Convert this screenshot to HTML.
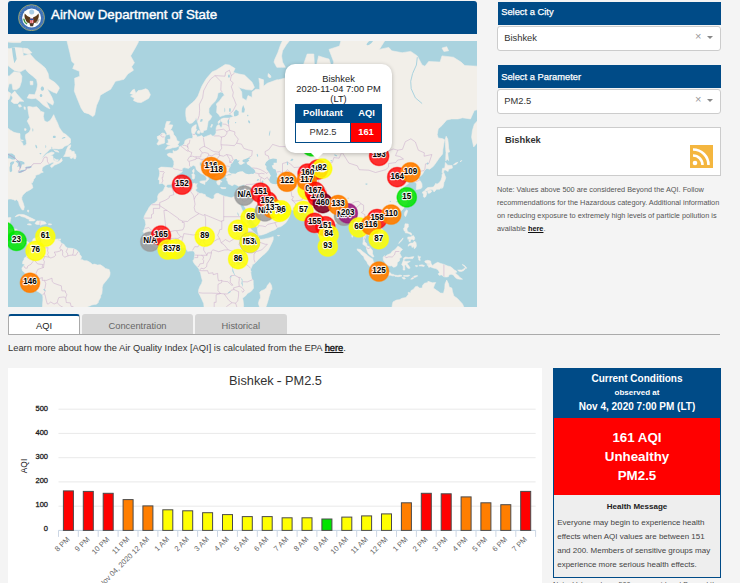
<!DOCTYPE html>
<html><head><meta charset="utf-8"><title>AirNow Department of State</title>
<style>
*{box-sizing:border-box}
html,body{margin:0;padding:0}
body{width:740px;height:583px;overflow:hidden;background:#f4f4f4;font-family:"Liberation Sans",sans-serif;position:relative;color:#333}
.abs{position:absolute}
#hdr{left:8px;top:1px;width:469px;height:33px;background:#004b87;border-radius:3px 3px 0 0}
#hdr .t{position:absolute;left:43px;top:5px;font-size:13.35px;-webkit-text-stroke:.4px #fff;color:#fff;white-space:nowrap;line-height:18px}
#map{left:8px;top:41px;width:469px;height:266px;background:#aad3df;overflow:hidden}
.ml{font:bold 9.7px "Liberation Sans",sans-serif;text-anchor:middle;fill:#000;stroke:rgba(255,255,255,.9);stroke-width:2.3px;paint-order:stroke;stroke-linejoin:round}
#pop{left:277px;top:22.5px;width:107px;height:89.5px;background:#fff;border-radius:10px;box-shadow:0 1px 4px rgba(0,0,0,.25);font-size:9.33px;text-align:center;color:#222}
#pop .arrow{position:absolute;left:26.2px;top:89.4px;width:0;height:0;border:6.3px solid transparent;border-top:6.2px solid #fff;border-bottom:0}
.sh{left:498px;width:222.5px;height:24px;background:#004b87;color:#fff;font-size:9.33px;line-height:24px;padding-left:3.2px;-webkit-text-stroke:.25px #fff}
.sb{left:497px;width:224px;height:25px;background:#fff;border:1px solid #ccc;border-radius:3px;font-size:9.33px;line-height:22.6px;padding-left:6.3px;color:#333}
.sb .x{position:absolute;right:18.5px;top:-2px;color:#999;font-size:11px}
.sb .c{position:absolute;right:7px;top:8.7px;width:0;height:0;border:3px solid transparent;border-top:3.5px solid #888;border-bottom:0}
#city{left:497px;top:127px;width:224px;height:49px;background:#fff;border:1px solid #ccc}
#city b{position:absolute;left:7px;top:7px;font-size:9.33px;color:#333}
#note{left:497px;top:183px;width:230px;font-size:7.33px;line-height:13px;color:#555}
#note b{color:#111;text-decoration:underline}
#tabs{left:8px;top:314px;width:712px;height:21px;border-bottom:1px solid #aaa}
.tab{position:absolute;top:0;height:20px;background:#d5d5d5;color:#666;font-size:9.33px;text-align:center;line-height:24px;border-radius:3px 3px 0 0}
.tab.on{background:#fff;color:#222;border:1px solid #aaa;border-top:2px solid #004b87;border-bottom:0;height:20px;line-height:20px}
#learn{left:8px;top:343px;font-size:9.33px;color:#333;white-space:nowrap}
#learn b{text-decoration:underline;color:#111;font-weight:normal;-webkit-text-stroke:.35px #111}
#chart{left:8px;top:368px;width:534.3px;height:215px;background:#fff}
#ctitle{left:8px;top:372.6px;width:535px;text-align:center;font-size:12.75px;color:#333}
.yl{font:7.5px "Liberation Sans",sans-serif;text-anchor:end;fill:#222;stroke:#222;stroke-width:.3px}
.xl{font:7.5px "Liberation Sans",sans-serif;text-anchor:end;fill:#666}
#cond{left:553px;top:368px;width:168px;height:210px;border:1px solid #004b87;background:#eee}
#cond .h{position:absolute;left:-1px;top:-1px;width:168px;height:50px;background:#004b87;color:#fff;text-align:center;font-weight:bold}
#cond .r{position:absolute;left:0;top:49px;width:166px;height:77px;background:#ff0000;color:#fff;text-align:center;font-weight:bold;font-size:13.33px;line-height:19px;padding-top:10px}
#cond .m{position:absolute;left:0;top:126.5px;width:166px;text-align:center;font-size:8px;font-weight:bold;color:#222;padding-top:6px}
#cond .p{position:absolute;left:3.2px;top:146.5px;width:160px;font-size:8px;line-height:14px;color:#444}
#note2{left:553px;top:580px;font-size:7.33px;color:#555;white-space:nowrap}
</style></head><body>
<div id="hdr" class="abs">
<svg class="abs" style="left:10px;top:2.5px" width="27" height="27" viewBox="0 0 27 27"><circle cx="13.5" cy="13.7" r="13" fill="#3c6fb4" stroke="#b4b468" stroke-width=".8"/><circle cx="13.5" cy="13.7" r="11.6" fill="none" stroke="#6f97cf" stroke-width=".7" stroke-dasharray="1 1"/><circle cx="13.6" cy="14" r="9.5" fill="#fdfdfd"/><circle cx="13.7" cy="7.9" r="2.5" fill="#a9cde6"/><path d="M6.7 9.4Q5.6 14.2 9.6 18.8L12.2 18.9L12.3 13.4Q9.2 12.6 6.7 9.4Z" fill="#5b3a1a"/><path d="M20.6 9.4Q21.7 14.2 17.7 18.8L15.1 18.9L15 13.4Q18.1 12.6 20.6 9.4Z" fill="#5b3a1a"/><path d="M11.4 19L16 19L15 22.3L12.3 22.3Z" fill="#4a3a2a"/><rect x="11.8" y="14.6" width="3.8" height="4.6" rx=".8" fill="#e2474d"/><path d="M12.9 15.8V19.1M14.5 15.8V19.1" stroke="#fff" stroke-width=".55"/><rect x="11.8" y="14.6" width="3.8" height="1.5" fill="#2b4f9c"/><path d="M5.9 15.2Q6.2 18.2 8.6 19.6" stroke="#3f9440" stroke-width="1.5" fill="none" stroke-linecap="round"/><path d="M21.3 15.4L18.8 19.8M20.3 15L18 19.2" stroke="#8a8478" stroke-width=".7" fill="none"/></svg>
<div class="t">AirNow Department of State</div></div>

<div id="map" class="abs">
<svg class="abs" style="left:0;top:0" width="469" height="266" viewBox="8 41 469 266"><defs><clipPath id="landclip"><path d="M37.6 9.8L47.1 29.0L62.3 31.4L67.0 41.1L69.9 52.7L71.8 61.5L74.6 63.9L72.7 68.5L79.4 71.3L79.8 76.2L74.6 78.3L75.0 84.8L74.3 91.1L77.5 99.2L81.3 108.4L84.1 112.4L88.9 113.9L92.7 116.6L94.6 115.1L95.5 110.4L96.5 105.5L99.3 99.2L100.3 95.2L105.0 92.4L110.7 89.2L115.4 81.3L124.0 79.3L127.8 74.0L133.5 70.2L131.6 66.8L134.4 62.7L130.6 55.9L134.4 49.4L138.2 42.6L140.1 31.4L138.2 9.8ZM130.1 93.4L132.5 90.1L134.4 89.2L135.8 93.4L138.2 90.6L142.0 90.1L145.8 88.7L148.1 90.1L150.4 94.7L148.7 98.3L145.8 100.0L141.1 102.6L137.3 102.2L133.5 100.5L134.4 98.3L130.6 96.1L133.5 94.7ZM165.4 149.3L169.6 148.7L172.4 147.8L176.2 147.2L178.9 146.0L177.7 144.8L179.4 141.7L177.0 140.7L176.4 138.5L175.8 136.9L173.7 134.6L173.2 132.3L172.2 130.6L170.1 130.6L171.8 127.9L172.8 125.0L169.6 124.7L168.4 125.0L170.3 121.5L166.7 121.5L165.8 124.0L165.2 127.2L164.4 128.9L165.8 131.3L167.1 133.9L166.5 134.9L169.6 134.3L170.5 137.2L170.5 139.1L167.7 139.5L168.2 140.7L168.4 142.6L166.3 143.8L167.7 144.8L170.5 145.4L169.6 146.0L167.7 146.3ZM164.6 142.9L164.6 139.5L164.8 137.2L165.8 135.3L164.4 133.3L162.0 133.0L160.1 135.3L157.2 136.6L157.6 139.1L159.1 140.1L157.6 142.9L156.8 144.1L158.2 145.1L161.0 144.1L163.9 143.2ZM165.6 186.2L164.2 184.7L162.2 183.3L159.3 183.8L159.5 180.4L158.2 179.5L159.3 176.0L159.7 173.5L159.3 170.2L158.5 168.6L161.0 167.1L165.2 167.3L169.0 167.6L172.8 167.9L173.9 164.7L173.9 161.5L172.0 157.9L168.0 155.9L167.1 154.2L169.6 153.1L173.2 153.6L173.0 150.4L174.1 151.3L176.4 151.0L179.0 149.3L179.2 146.9L182.3 145.7L184.4 143.5L185.1 140.4L187.6 139.1L189.5 138.5L192.3 138.5L192.9 136.9L192.5 134.3L191.6 131.9L191.6 128.5L192.5 126.8L195.0 125.0L196.3 124.7L195.9 128.9L196.9 129.6L195.6 131.3L194.6 133.3L195.0 134.6L197.1 135.9L196.7 137.2L199.0 136.6L201.8 135.6L203.3 137.5L206.6 136.2L210.9 134.6L212.3 135.9L214.2 135.9L216.1 133.0L216.1 127.9L217.2 125.4L219.1 124.7L220.4 127.2L222.0 127.2L222.5 122.5L220.8 121.1L220.8 119.2L223.7 118.1L229.4 118.1L233.5 116.6L230.3 114.3L225.6 114.7L219.9 116.6L218.9 114.7L216.6 112.4L217.0 106.4L216.3 103.9L219.5 100.9L222.7 96.5L224.4 95.2L222.9 92.4L220.8 92.0L218.0 92.9L217.0 97.9L215.1 101.3L211.3 105.1L209.0 108.4L208.9 112.4L209.4 113.9L211.9 116.2L210.4 119.2L208.1 121.5L207.5 125.4L206.6 129.9L203.7 130.6L203.2 132.6L200.9 132.6L200.1 129.9L198.6 125.4L197.5 121.8L196.7 119.2L196.1 117.4L195.2 120.0L192.3 122.9L189.5 123.6L186.8 121.1L185.9 116.2L185.7 112.4L186.1 108.4L189.5 105.1L192.5 102.6L195.2 100.0L198.0 96.1L199.9 91.1L201.8 86.3L204.7 81.3L206.6 78.3L209.4 75.1L212.3 71.8L216.1 70.2L220.8 67.3L225.2 64.5L229.4 65.0L235.1 68.5L233.2 72.4L238.9 74.0L244.5 75.1L252.1 82.3L254.4 87.3L252.1 90.1L246.4 89.6L239.8 87.7L237.9 85.8L241.7 92.0L242.1 97.9L246.4 100.5L248.0 95.6L252.1 97.4L252.1 92.0L255.9 89.2L259.7 89.6L259.7 83.8L258.8 78.3L263.5 79.8L263.5 86.3L267.3 83.3L276.8 79.8L278.7 79.8L288.2 77.2L292.0 71.8L298.7 74.6L303.4 77.2L306.2 79.8L303.4 72.9L303.4 65.0L307.2 54.0L313.8 54.0L314.4 65.0L312.9 78.8L315.7 86.3L312.9 89.6L316.7 83.8L317.6 77.2L320.5 76.2L316.7 65.0L318.6 55.9L324.3 57.8L329.0 59.1L331.9 67.9L333.8 62.1L329.0 49.4L339.5 46.1L341.4 38.9L356.6 29.8L373.6 17.2L390.7 31.4L379.3 49.4L388.8 47.4L391.7 50.8L402.1 52.7L410.7 51.4L417.3 55.9L422.1 65.0L424.9 66.2L428.7 61.5L440.1 62.1L442.0 55.9L453.4 57.2L461.0 62.1L464.8 65.6L478.1 66.2L480.0 72.4L491.4 73.5L491.4 116.2L485.7 123.6L483.8 133.9L479.8 137.2L476.7 143.5L473.7 146.9L471.6 137.2L472.4 130.6L474.3 124.3L480.0 118.1L483.8 114.3L486.2 107.2L480.0 109.2L474.3 110.4L470.5 118.9L462.5 117.8L458.1 118.9L451.5 118.9L446.7 120.0L442.0 125.4L438.2 128.9L437.2 134.6L438.2 137.9L442.9 138.8L444.5 139.8L443.9 143.5L442.9 149.6L442.6 153.9L439.1 158.2L436.3 162.3L433.4 166.3L429.6 169.2L426.8 168.4L424.3 170.7L422.6 174.0L420.2 176.5L418.3 177.3L418.3 179.0L420.2 180.7L421.9 183.8L422.1 187.1L421.1 188.5L418.3 189.2L416.2 189.6L416.4 187.3L416.7 184.3L416.0 182.6L413.5 181.4L414.1 178.2L412.4 176.8L409.7 177.5L406.9 179.2L407.8 175.3L405.9 174.3L403.1 177.0L400.2 178.5L399.7 179.9L401.7 181.9L403.1 183.3L405.5 181.9L408.8 182.8L407.8 184.0L405.0 185.9L402.7 188.3L404.6 190.3L405.7 193.7L407.6 196.0L407.6 197.8L405.7 199.1L407.8 200.2L407.1 203.4L405.3 204.7L403.5 208.4L402.1 210.0L400.2 211.7L397.8 214.0L393.2 215.8L391.7 216.3L388.3 217.5L385.8 218.1L385.4 220.1L384.5 217.7L381.8 217.5L379.0 219.1L377.1 222.1L378.4 225.1L380.7 227.9L382.9 230.1L383.7 234.0L383.5 236.9L381.2 238.7L379.3 239.6L378.4 241.4L375.9 242.9L375.4 240.8L374.6 239.6L372.7 239.3L371.6 237.1L369.8 235.6L367.8 235.2L367.8 233.6L366.0 234.0L365.9 236.5L364.5 239.5L364.7 241.8L366.6 243.5L367.0 245.8L369.3 246.6L370.4 247.9L372.5 250.6L372.5 253.8L374.0 256.7L372.7 257.0L370.8 255.5L368.5 253.8L367.4 251.5L366.6 249.0L366.4 247.1L365.3 245.8L362.8 244.3L363.2 241.4L363.4 238.5L363.6 235.6L362.6 232.7L361.7 229.7L361.5 227.7L360.0 226.7L357.1 229.1L355.2 228.7L355.6 225.7L355.2 223.1L353.7 221.1L351.4 218.7L350.5 216.1L348.2 215.6L345.2 217.1L343.3 217.3L341.4 217.9L341.0 219.7L338.5 221.3L336.2 223.6L332.8 226.7L330.5 228.3L328.5 230.1L328.3 233.6L327.9 236.5L327.7 239.8L326.2 241.8L324.7 242.5L323.3 244.1L321.4 242.3L320.5 239.5L319.0 236.5L317.8 233.6L316.9 230.7L315.5 227.7L314.8 224.8L314.4 222.3L314.2 219.7L314.0 217.7L313.3 218.7L311.0 219.3L309.5 218.7L307.2 216.1L309.1 215.2L306.2 214.0L304.2 212.5L302.8 210.7L302.5 209.6L298.7 210.0L293.9 210.2L291.1 209.8L287.8 209.4L285.0 209.0L284.0 206.2L281.6 206.9L278.7 207.1L275.9 205.2L273.6 204.3L272.5 201.7L271.1 199.5L269.2 198.9L268.3 199.7L267.1 200.8L268.3 203.0L269.0 204.9L271.1 207.1L271.5 209.2L272.6 210.9L272.6 209.4L273.4 208.1L274.2 209.4L274.0 211.3L274.9 212.3L277.8 212.3L279.7 211.7L281.6 209.6L282.7 208.1L283.3 210.5L284.0 212.1L287.3 213.4L289.7 215.6L287.8 219.7L285.9 222.7L283.1 225.0L280.6 226.7L277.8 227.3L275.3 229.5L272.1 230.7L269.2 232.1L266.4 233.4L261.6 235.0L258.8 235.2L258.2 233.6L257.5 230.7L257.3 227.9L255.6 225.1L254.0 222.7L251.8 220.1L250.4 217.7L249.3 213.6L247.2 211.7L245.7 208.4L243.6 205.2L242.5 203.9L242.6 200.8L241.7 203.4L241.3 204.5L240.0 203.4L239.2 201.9L238.1 200.0L237.5 197.1L239.8 197.3L241.3 196.9L242.3 194.9L242.6 193.1L243.8 190.1L244.4 188.0L244.5 186.2L244.9 184.5L243.2 184.7L240.7 185.4L238.5 186.2L236.0 184.7L234.3 184.3L232.2 185.7L229.7 184.5L228.2 183.8L227.8 181.4L226.5 180.2L227.3 178.5L225.9 177.7L225.9 176.3L228.4 175.5L231.3 175.3L231.6 173.8L231.1 174.0L228.4 174.0L226.5 175.3L225.6 174.5L223.7 174.3L221.8 174.8L221.8 176.3L220.8 175.8L219.7 175.3L219.3 177.3L220.2 178.7L219.9 179.7L221.8 181.4L221.8 182.1L220.2 181.6L220.2 183.1L219.5 185.0L218.7 185.0L217.4 184.3L216.6 181.9L217.6 180.7L216.1 179.5L214.7 177.7L213.0 175.3L213.2 172.8L212.3 171.2L210.4 169.7L208.5 168.4L206.2 166.8L204.7 164.7L203.3 162.8L202.0 163.9L202.0 161.7L199.7 162.5L199.6 165.0L201.8 167.3L203.2 170.2L205.2 171.7L207.0 171.7L206.6 173.0L208.9 174.0L211.3 176.0L210.9 177.0L208.5 175.3L207.7 177.3L208.9 179.0L207.5 180.4L206.6 181.6L205.9 181.4L206.2 179.9L206.8 178.5L205.8 176.5L204.3 175.0L203.2 174.5L200.9 173.5L199.4 172.2L197.1 170.5L196.1 168.9L195.6 166.6L193.3 165.2L191.4 166.6L190.2 167.1L188.7 168.4L186.5 168.1L184.2 167.6L182.3 168.4L182.1 170.5L182.3 171.7L180.4 173.0L177.7 174.5L175.8 177.3L175.6 178.0L176.6 179.5L175.3 180.7L174.9 182.4L172.8 183.3L171.8 184.3L167.8 184.5L166.1 185.9ZM238.1 200.0L238.3 203.0L240.0 204.9L241.1 207.3L242.6 210.9L244.0 213.4L246.3 216.7L246.8 219.3L247.0 222.7L249.3 224.8L250.8 229.1L252.7 231.1L255.4 233.6L258.2 235.6L258.4 237.3L260.7 239.5L264.5 238.9L269.2 237.9L273.2 236.7L273.2 239.5L272.1 242.3L270.2 246.2L268.3 250.0L265.4 253.2L262.4 255.7L258.8 259.1L255.2 262.9L252.5 264.8L251.6 267.3L250.2 270.0L250.8 272.4L251.2 275.7L251.8 278.6L253.1 280.1L253.3 284.4L253.5 288.3L251.2 291.3L247.4 293.5L245.5 295.9L242.6 298.1L243.2 301.3L243.6 305.4L243.4 307.5L238.9 309.6L238.5 312.8L236.0 317.1L233.2 325.9L204.7 325.9L204.7 312.8L203.7 303.4L201.8 299.3L199.9 295.2L198.6 292.7L198.6 289.9L199.9 286.3L201.6 283.4L202.4 280.5L201.3 276.7L200.5 272.8L199.4 270.9L199.0 269.0L197.5 267.1L195.2 264.8L193.9 262.9L192.9 260.8L194.2 259.1L194.2 257.6L194.8 255.1L194.8 253.4L194.4 252.1L193.1 250.9L192.0 250.9L189.5 251.1L187.6 251.3L186.3 249.0L184.7 247.5L182.7 247.3L180.0 247.5L178.5 247.9L176.2 248.7L174.3 249.6L172.4 250.4L170.3 249.8L167.7 249.6L164.8 250.4L162.0 251.1L159.1 249.6L155.7 247.5L154.4 246.4L152.5 245.2L151.1 243.3L150.9 241.6L148.7 239.5L147.7 238.5L145.8 236.9L144.5 235.8L144.3 233.8L143.0 231.3L144.7 228.7L144.9 227.3L145.8 224.8L145.4 222.1L144.9 219.7L143.9 218.7L144.3 216.3L145.8 213.2L147.9 209.8L148.9 207.7L151.1 204.9L151.7 204.3L154.4 203.2L157.2 200.8L157.8 198.9L157.6 196.4L158.7 194.0L160.1 192.4L161.8 191.7L163.3 190.6L164.4 188.0L165.0 186.6L166.1 186.4L168.0 188.0L170.5 187.8L172.4 188.3L174.3 186.9L176.4 186.2L178.7 185.0L181.9 184.3L183.8 184.0L186.6 184.3L189.5 183.6L192.5 184.0L194.8 183.1L195.8 184.3L197.3 183.6L196.3 185.2L196.3 186.9L197.3 188.0L195.4 190.1L196.9 191.7L198.0 192.6L199.9 193.5L201.3 193.3L203.7 194.2L205.2 194.6L205.8 196.4L208.5 197.5L211.3 198.9L213.2 199.1L214.2 197.8L214.2 195.3L215.7 193.7L218.0 193.3L220.2 194.4L223.7 196.0L225.6 196.4L228.4 197.1L231.3 197.8L233.2 197.1L235.1 196.2L237.0 196.7L237.5 197.1ZM269.8 282.5L271.5 285.4L272.1 289.3L270.6 290.3L270.2 293.3L269.2 296.3L268.1 300.3L266.8 304.4L265.4 308.5L262.0 309.6L259.7 307.5L258.4 303.4L259.2 300.3L260.5 297.9L260.3 295.2L259.7 292.3L261.3 290.7L264.1 289.7L266.4 287.9L267.3 285.6L268.8 283.8ZM328.1 240.8L330.4 243.3L331.7 245.8L330.9 247.5L329.0 248.3L327.9 247.1L327.7 244.3L328.1 242.3ZM29.4 243.1L30.4 244.1L31.3 242.5L32.7 241.2L32.9 239.3L34.2 238.3L35.5 237.9L37.6 237.5L39.1 236.5L40.8 235.8L40.5 237.5L39.7 238.5L40.5 239.5L41.4 238.1L42.9 237.5L43.3 236.2L44.1 237.5L46.5 238.5L47.1 239.5L50.9 239.3L52.8 240.2L54.7 239.5L57.5 239.1L58.7 239.1L57.5 240.0L60.4 241.4L61.3 243.3L62.7 243.7L64.2 244.6L65.3 246.4L67.6 248.1L71.4 248.3L73.7 248.7L76.5 250.0L78.0 251.3L79.4 252.9L79.8 254.8L81.3 256.1L81.3 258.0L80.3 259.5L83.2 259.9L84.1 260.8L87.0 260.8L89.8 262.2L91.7 263.7L92.1 264.6L94.6 264.1L97.4 265.0L100.3 264.8L103.1 266.5L105.4 268.4L107.9 269.2L109.2 269.6L109.4 270.5L110.1 272.8L109.9 274.9L109.0 277.2L107.1 279.5L105.6 281.5L103.1 284.4L102.2 287.3L102.2 290.3L101.8 293.7L100.8 295.2L100.6 297.5L99.7 298.9L98.4 301.3L98.4 302.3L96.5 304.2L94.2 304.4L91.7 305.0L89.8 306.0L88.1 306.5L86.0 308.1L84.1 310.6L84.1 325.9L41.4 325.9L42.5 310.6L42.5 305.4L42.9 300.3L42.9 297.3L42.7 295.0L40.6 293.3L38.6 291.9L34.8 289.9L32.3 287.9L31.3 286.2L29.8 282.6L28.7 280.5L27.5 278.2L26.2 275.1L24.5 272.4L22.6 270.9L22.0 269.0L21.9 268.1L23.4 266.1L24.3 265.2L24.5 263.9L22.6 263.9L22.8 261.4L24.1 259.5L24.3 258.0L26.4 256.8L27.0 255.1L29.1 254.2L29.6 252.1L29.3 249.0L29.3 246.8L28.3 245.8ZM29.4 243.1L28.5 242.3L27.2 241.6L25.3 241.2L24.3 242.0L22.4 242.7L20.9 242.3L20.1 242.0L18.6 240.4L17.5 238.9L17.3 237.5L17.5 235.6L17.9 232.7L18.2 230.7L16.7 229.3L14.8 228.9L12.9 228.9L11.0 229.1L9.1 229.1L7.4 228.9L8.2 227.7L8.8 225.7L8.8 223.8L9.5 224.2L10.1 221.7L10.3 219.7L11.0 217.7L9.1 217.5L5.3 218.3L-4.2 220.7L-4.2 232.7L1.2 231.7L2.5 232.3L5.3 233.0L7.2 233.8L9.1 234.2L10.1 234.8L12.0 236.9L13.3 238.5L13.5 240.4L14.6 241.2L15.4 241.0L17.3 242.3L17.7 243.3L18.8 244.1L20.1 243.9L21.5 244.8L22.6 245.8L23.9 245.4L23.8 243.9L24.7 243.3L26.2 242.3L27.5 243.7L27.7 245.0L28.3 245.8ZM15.0 216.9L16.7 215.2L19.0 214.4L22.0 214.4L24.3 214.8L27.2 216.1L29.6 217.3L31.9 218.3L35.3 220.1L33.8 220.9L29.1 220.9L29.6 219.5L27.2 218.7L24.7 217.3L21.5 216.5L19.6 215.4L17.1 216.3ZM35.0 223.6L36.9 220.9L38.6 220.9L40.5 220.9L43.3 221.3L45.2 222.1L46.3 223.6L45.2 224.0L42.4 224.4L40.5 225.3L39.5 224.4L36.7 224.4ZM27.5 224.0L30.0 223.8L31.5 224.8L30.0 225.1L27.5 224.6ZM48.6 223.8L51.5 224.0L51.3 224.8L48.6 224.8ZM58.7 240.2L59.4 238.9L60.6 238.9L60.4 240.2ZM-4.2 199.7L6.3 199.3L7.2 201.5L8.2 199.1L11.0 198.9L13.9 199.7L14.8 200.6L16.7 199.5L18.6 201.9L19.2 204.5L20.5 207.3L22.0 209.8L23.6 210.0L24.3 206.9L23.2 203.0L21.9 199.7L21.7 197.5L22.8 195.1L24.5 193.5L26.2 191.7L28.3 190.8L31.0 189.2L32.9 187.8L32.1 184.7L31.3 183.6L31.3 180.2L31.9 183.3L33.4 180.7L33.8 179.2L35.3 177.5L35.7 175.3L39.5 174.0L41.0 172.8L43.3 172.2L42.0 170.7L42.2 168.6L42.9 167.1L45.6 165.2L49.0 163.9L50.9 163.1L53.2 162.0L53.9 163.1L50.7 165.5L50.7 166.8L51.8 167.6L54.7 165.0L55.6 164.7L59.4 163.1L60.4 162.5L62.3 160.9L61.5 158.2L59.4 160.9L57.5 161.7L55.1 160.9L53.4 160.1L53.2 158.2L52.8 155.9L50.3 155.4L53.7 153.9L54.3 152.8L51.8 151.9L49.0 153.1L46.2 154.2L43.3 157.3L41.4 158.7L43.3 155.9L45.2 153.6L48.1 151.3L50.1 149.0L54.7 148.7L58.9 149.0L62.3 148.4L64.6 146.3L68.0 145.1L70.5 142.9L70.5 138.8L68.0 136.6L66.1 134.6L63.2 133.0L61.3 130.6L59.1 127.2L57.5 122.9L55.6 119.2L53.7 114.7L51.8 118.1L49.9 120.7L47.1 122.2L44.3 120.7L43.3 116.2L44.1 112.4L40.5 111.2L39.5 109.6L36.7 106.8L32.9 107.2L29.1 106.4L27.7 106.8L28.1 110.4L28.7 114.3L29.4 117.4L27.2 121.1L29.6 125.4L30.8 128.9L29.1 132.3L25.6 134.6L25.3 137.2L26.2 140.4L26.6 143.5L25.3 145.4L23.4 145.7L22.4 142.9L20.5 140.7L20.0 137.2L20.0 133.6L16.7 133.0L13.9 132.3L10.1 129.9L7.2 127.5L3.4 126.5L-4.2 123.6ZM63.6 156.5L65.3 153.9L66.1 151.0L67.2 148.1L68.6 145.7L70.8 144.8L70.3 147.2L68.9 149.6L70.8 149.9L71.8 151.6L74.1 151.3L74.6 153.9L75.6 153.9L76.1 156.8L75.2 159.0L73.7 158.4L73.7 156.8L71.8 158.4L69.9 157.9L70.8 156.5L67.0 156.5ZM5.3 47.4L9.1 48.8L14.8 47.4L22.4 48.1L23.4 55.9L30.0 54.0L35.7 60.3L40.5 63.9L45.2 67.9L48.1 73.5L49.0 78.8L54.7 82.3L58.5 86.3L59.4 88.2L56.6 93.4L52.8 92.0L47.1 88.7L51.8 97.0L53.7 102.2L52.8 105.1L46.2 101.3L49.9 108.8L47.1 107.6L43.3 105.1L39.5 101.3L35.7 98.3L31.9 98.7L27.2 97.9L29.1 94.3L34.8 94.7L36.7 89.6L37.6 84.8L36.7 79.8L32.9 76.2L28.1 72.4L25.3 69.1L20.5 71.8L14.8 70.7L11.0 67.9L7.2 65.0L6.3 55.9ZM11.0 94.7L14.8 91.1L16.7 93.8L21.5 99.2L23.8 101.3L19.6 101.3L17.7 103.5L13.9 103.5L11.0 101.3L12.9 97.9ZM-4.2 70.7L9.1 76.2L13.9 71.8L19.6 72.4L21.9 76.2L21.5 81.3L19.6 87.3L16.7 89.6L12.9 89.6L12.0 83.8L9.1 83.8L7.2 91.1L11.0 93.4L9.1 99.2L5.3 100.9L-4.2 104.3ZM197.1 -0.2L202.8 18.9L204.7 26.6L208.5 26.6L212.3 14.4L218.0 12.6L223.7 4.9L214.2 -5.5L204.7 -5.5ZM274.0 62.1L276.8 67.3L281.6 67.3L285.4 67.3L282.5 62.1L281.6 55.9L282.5 50.8L286.3 44.7L292.0 37.5L299.6 31.4L307.2 24.9L301.5 23.2L290.1 29.8L284.4 36.7L280.6 44.7L277.8 52.7L274.9 59.1ZM446.2 136.2L447.7 139.1L448.3 143.5L448.6 148.1L449.6 151.9L447.7 152.5L448.3 158.2L448.6 160.6L447.1 159.0L445.8 160.9L445.8 156.8L446.0 152.5L445.6 148.1L445.4 143.5L445.2 139.5ZM442.0 172.8L442.6 168.4L444.8 168.1L445.4 162.5L447.7 165.2L452.1 165.5L452.4 168.1L448.6 169.2L448.1 171.5L445.2 169.9L443.5 170.5L443.9 172.2ZM443.9 172.8L444.8 175.3L445.8 177.7L444.8 180.7L443.9 182.6L443.5 185.7L442.6 188.0L441.6 188.5L441.4 187.3L439.7 189.2L438.6 189.2L436.3 189.2L435.9 190.1L434.0 191.9L432.9 190.1L431.0 189.2L428.7 190.1L426.8 191.0L424.9 190.8L424.9 189.9L427.8 187.6L430.6 187.3L433.4 187.1L434.4 185.7L435.9 183.3L436.9 184.3L439.1 182.8L441.0 180.2L442.0 177.0L442.0 174.8L442.6 173.5ZM424.9 191.0L426.2 191.7L426.8 193.5L425.7 196.7L424.3 197.5L423.4 196.7L423.6 194.2L422.4 193.1L422.6 191.9L423.8 191.2ZM427.8 190.8L430.6 190.1L431.9 191.2L431.0 192.4L428.7 193.5L427.8 192.4ZM406.9 209.8L407.6 210.9L406.7 214.2L405.5 216.7L404.4 215.2L404.4 213.2L405.5 210.9ZM386.4 220.5L386.9 221.5L385.8 223.4L384.1 224.4L382.6 223.4L382.6 221.9L384.5 220.7ZM405.2 223.8L408.2 224.0L408.4 226.7L406.9 228.7L407.2 230.9L408.8 232.3L411.2 233.0L411.8 235.2L410.3 234.6L409.0 233.4L407.1 233.0L405.3 232.8L405.2 231.3L404.0 230.7L403.6 228.3L404.8 227.1L404.8 225.3ZM408.0 246.2L408.8 244.3L410.7 243.1L412.9 243.1L414.5 241.0L416.0 242.7L416.4 245.8L415.8 247.5L414.3 248.7L413.9 246.6L412.0 247.5L411.6 245.4L409.7 245.2ZM410.3 236.9L413.5 235.6L414.8 238.1L414.1 240.0L412.9 240.0L412.4 238.9L410.7 239.8L410.1 242.0L408.8 241.2L409.3 238.9L407.8 239.3L407.8 237.1ZM403.1 237.9L402.5 239.6L400.2 242.3L398.7 243.5L399.5 242.0L401.6 239.6ZM384.3 255.7L385.6 256.3L387.5 254.8L390.5 253.6L392.4 251.1L394.5 250.0L396.4 248.1L397.9 246.2L399.5 247.1L402.5 249.4L400.6 251.3L399.7 253.2L401.7 257.2L399.8 258.0L399.3 261.0L397.4 262.3L397.0 265.6L395.5 266.7L393.6 267.3L391.7 265.8L389.8 266.0L387.9 265.2L385.4 264.8L385.0 262.3L383.5 260.4L383.1 257.6ZM357.1 248.9L360.4 249.6L362.8 251.7L365.7 253.8L367.6 255.5L370.2 257.6L372.7 258.9L373.3 261.4L374.6 262.9L377.1 264.8L377.4 265.8L377.3 270.5L374.8 270.5L372.7 268.6L370.4 266.9L367.9 264.2L366.6 261.4L364.5 259.1L363.6 256.3L361.5 254.8L360.0 252.5L357.5 250.4ZM375.9 272.4L377.4 270.7L379.3 270.9L381.8 271.5L382.8 272.4L386.0 272.6L386.9 271.7L390.0 272.6L391.7 274.2L393.6 274.4L393.4 276.1L390.7 275.3L386.9 275.1L384.1 274.2L381.2 274.4L378.4 273.6ZM393.6 274.9L395.9 275.3L397.8 275.5L399.8 275.1L401.2 275.3L402.1 275.9L400.6 276.3L398.3 276.7L396.4 276.5L394.9 276.3ZM403.6 275.5L405.9 275.5L409.3 275.1L409.7 275.5L407.8 276.5L405.0 276.3L403.6 276.3ZM402.1 277.6L404.4 277.4L405.5 278.6L404.0 279.2L402.5 278.2ZM410.7 279.2L412.4 277.4L414.5 276.1L417.3 275.5L417.7 276.1L414.5 277.6L412.6 279.0ZM403.6 258.0L405.5 257.0L408.8 257.6L412.6 256.7L413.9 256.7L412.6 258.7L409.7 258.6L406.9 258.6L404.4 259.1L404.0 261.0L406.3 261.4L409.3 261.2L410.3 261.4L407.8 262.7L407.2 263.7L408.8 265.8L410.1 268.1L409.1 268.4L407.8 268.2L406.9 267.1L405.7 264.8L404.6 265.2L404.8 268.6L404.8 270.1L403.1 270.0L403.3 267.7L403.1 266.1L401.7 264.6L402.7 262.0L403.6 259.7ZM418.3 255.7L419.2 256.7L420.5 256.7L419.8 258.6L420.2 260.4L418.8 260.1L418.8 258.0L418.1 257.6ZM419.2 265.2L422.1 264.8L424.5 265.6L424.0 266.5L421.1 266.0L419.2 266.0ZM415.4 265.6L417.3 265.4L417.7 266.3L416.4 266.7L415.4 266.1ZM424.9 261.0L427.8 260.3L430.6 261.0L431.0 263.3L432.5 265.8L434.4 263.9L437.8 262.3L440.1 263.3L443.9 264.4L447.7 266.0L450.5 266.7L453.0 268.6L454.3 270.1L456.2 270.9L456.8 272.2L455.3 272.4L455.8 273.8L457.6 274.9L460.0 277.6L462.5 279.2L460.0 279.2L457.2 278.8L455.3 277.6L453.4 274.9L451.1 274.2L449.2 274.7L448.3 276.7L446.4 277.0L443.9 276.8L441.6 274.9L439.1 275.3L438.2 273.8L439.5 272.4L438.2 270.0L435.9 268.6L433.1 267.9L430.6 266.9L428.7 267.3L428.3 265.8L426.8 264.8L429.6 264.2L430.2 263.7L427.4 263.7L424.9 262.2ZM457.7 270.1L460.0 270.0L461.9 270.0L463.8 269.0L465.2 267.5L465.3 268.8L463.8 270.5L461.4 271.5L459.1 271.3ZM462.5 264.4L464.8 265.8L466.7 267.9L466.3 268.4L464.4 266.3L462.3 264.8ZM391.7 310.6L392.2 305.4L393.0 301.9L396.4 300.1L399.3 299.7L402.1 298.3L405.9 297.5L408.4 294.4L408.2 292.3L410.7 292.9L410.9 290.7L413.5 289.3L415.4 286.7L417.3 286.2L419.6 288.1L422.2 288.1L422.6 285.4L424.5 283.2L427.8 282.6L427.9 281.3L432.5 282.8L435.7 282.5L434.4 285.0L433.4 288.1L436.3 290.1L440.5 293.1L443.5 293.3L444.8 288.3L445.0 284.0L446.7 280.1L448.6 284.0L449.2 287.1L451.9 288.1L452.4 291.3L453.8 295.9L457.2 298.3L459.5 300.7L462.5 304.0L463.8 306.9L466.7 309.6L466.7 325.9L392.6 325.9ZM199.9 181.4L201.6 180.9L205.8 180.7L204.9 183.1L204.9 184.5L203.3 183.8L199.9 182.4ZM191.8 174.3L193.7 173.5L194.8 175.3L194.4 178.5L193.1 179.2L192.1 178.5L192.3 176.0ZM192.5 170.5L194.0 168.9L194.2 171.5L193.7 173.0L192.7 172.2ZM220.8 187.3L222.7 187.6L226.1 187.8L225.6 188.5L222.7 188.7L220.8 188.0ZM237.5 188.5L238.9 187.6L241.9 186.9L240.7 188.5L238.9 189.4L237.7 189.2ZM180.8 177.5L182.3 176.8L182.7 177.7L181.9 178.2ZM197.1 131.6L199.0 130.3L200.1 131.6L199.4 133.6L197.5 133.3ZM210.6 126.8L212.1 124.0L212.3 125.8L211.1 127.5ZM218.0 121.8L219.9 120.0L220.2 122.2L218.3 123.6ZM277.4 235.4L279.7 235.4L279.1 236.0L277.8 236.0ZM250.6 270.5L251.0 270.9L251.2 271.7L250.6 271.5ZM352.2 233.6L352.8 234.6L352.4 237.3L351.8 236.9L352.0 235.0ZM27.7 210.0L28.7 210.2L28.5 212.1L27.5 211.5ZM23.4 48.1L28.1 48.8L31.9 52.7L28.1 54.0L23.4 52.7ZM1.5 27.4L9.1 28.2L24.3 31.4L24.3 36.7L20.5 42.6L12.9 42.6L5.3 41.8L1.5 40.4ZM18.6 104.7L20.5 104.7L21.5 106.4L19.6 107.2L18.6 106.0ZM23.9 106.8L25.3 107.2L25.3 109.6L24.3 109.2ZM30.0 81.3L32.9 81.3L32.9 84.8L30.4 84.8ZM20.9 139.8L23.4 140.4L22.0 141.0ZM24.7 128.5L26.2 128.9L25.8 130.6L24.5 130.3ZM53.7 149.9L57.5 150.7L59.1 152.2L55.6 151.6ZM54.1 158.4L56.6 159.8L58.5 159.8L57.5 160.9L55.1 160.4ZM268.3 73.5L270.2 75.1L271.1 77.2L269.2 77.7L267.9 76.2ZM453.4 165.0L455.3 163.1L458.1 162.3L456.2 164.2ZM460.0 161.5L461.9 160.4L461.0 161.5ZM437.2 36.7L440.1 30.6L445.8 31.4L450.5 36.0L447.7 39.7L442.0 40.4ZM454.3 35.2L461.9 37.5L459.1 40.4L455.3 38.9ZM442.0 48.1L446.7 46.7L448.6 50.8L443.9 51.4Z"/></clipPath></defs>
<path d="M37.6 9.8L47.1 29.0L62.3 31.4L67.0 41.1L69.9 52.7L71.8 61.5L74.6 63.9L72.7 68.5L79.4 71.3L79.8 76.2L74.6 78.3L75.0 84.8L74.3 91.1L77.5 99.2L81.3 108.4L84.1 112.4L88.9 113.9L92.7 116.6L94.6 115.1L95.5 110.4L96.5 105.5L99.3 99.2L100.3 95.2L105.0 92.4L110.7 89.2L115.4 81.3L124.0 79.3L127.8 74.0L133.5 70.2L131.6 66.8L134.4 62.7L130.6 55.9L134.4 49.4L138.2 42.6L140.1 31.4L138.2 9.8ZM130.1 93.4L132.5 90.1L134.4 89.2L135.8 93.4L138.2 90.6L142.0 90.1L145.8 88.7L148.1 90.1L150.4 94.7L148.7 98.3L145.8 100.0L141.1 102.6L137.3 102.2L133.5 100.5L134.4 98.3L130.6 96.1L133.5 94.7ZM165.4 149.3L169.6 148.7L172.4 147.8L176.2 147.2L178.9 146.0L177.7 144.8L179.4 141.7L177.0 140.7L176.4 138.5L175.8 136.9L173.7 134.6L173.2 132.3L172.2 130.6L170.1 130.6L171.8 127.9L172.8 125.0L169.6 124.7L168.4 125.0L170.3 121.5L166.7 121.5L165.8 124.0L165.2 127.2L164.4 128.9L165.8 131.3L167.1 133.9L166.5 134.9L169.6 134.3L170.5 137.2L170.5 139.1L167.7 139.5L168.2 140.7L168.4 142.6L166.3 143.8L167.7 144.8L170.5 145.4L169.6 146.0L167.7 146.3ZM164.6 142.9L164.6 139.5L164.8 137.2L165.8 135.3L164.4 133.3L162.0 133.0L160.1 135.3L157.2 136.6L157.6 139.1L159.1 140.1L157.6 142.9L156.8 144.1L158.2 145.1L161.0 144.1L163.9 143.2ZM165.6 186.2L164.2 184.7L162.2 183.3L159.3 183.8L159.5 180.4L158.2 179.5L159.3 176.0L159.7 173.5L159.3 170.2L158.5 168.6L161.0 167.1L165.2 167.3L169.0 167.6L172.8 167.9L173.9 164.7L173.9 161.5L172.0 157.9L168.0 155.9L167.1 154.2L169.6 153.1L173.2 153.6L173.0 150.4L174.1 151.3L176.4 151.0L179.0 149.3L179.2 146.9L182.3 145.7L184.4 143.5L185.1 140.4L187.6 139.1L189.5 138.5L192.3 138.5L192.9 136.9L192.5 134.3L191.6 131.9L191.6 128.5L192.5 126.8L195.0 125.0L196.3 124.7L195.9 128.9L196.9 129.6L195.6 131.3L194.6 133.3L195.0 134.6L197.1 135.9L196.7 137.2L199.0 136.6L201.8 135.6L203.3 137.5L206.6 136.2L210.9 134.6L212.3 135.9L214.2 135.9L216.1 133.0L216.1 127.9L217.2 125.4L219.1 124.7L220.4 127.2L222.0 127.2L222.5 122.5L220.8 121.1L220.8 119.2L223.7 118.1L229.4 118.1L233.5 116.6L230.3 114.3L225.6 114.7L219.9 116.6L218.9 114.7L216.6 112.4L217.0 106.4L216.3 103.9L219.5 100.9L222.7 96.5L224.4 95.2L222.9 92.4L220.8 92.0L218.0 92.9L217.0 97.9L215.1 101.3L211.3 105.1L209.0 108.4L208.9 112.4L209.4 113.9L211.9 116.2L210.4 119.2L208.1 121.5L207.5 125.4L206.6 129.9L203.7 130.6L203.2 132.6L200.9 132.6L200.1 129.9L198.6 125.4L197.5 121.8L196.7 119.2L196.1 117.4L195.2 120.0L192.3 122.9L189.5 123.6L186.8 121.1L185.9 116.2L185.7 112.4L186.1 108.4L189.5 105.1L192.5 102.6L195.2 100.0L198.0 96.1L199.9 91.1L201.8 86.3L204.7 81.3L206.6 78.3L209.4 75.1L212.3 71.8L216.1 70.2L220.8 67.3L225.2 64.5L229.4 65.0L235.1 68.5L233.2 72.4L238.9 74.0L244.5 75.1L252.1 82.3L254.4 87.3L252.1 90.1L246.4 89.6L239.8 87.7L237.9 85.8L241.7 92.0L242.1 97.9L246.4 100.5L248.0 95.6L252.1 97.4L252.1 92.0L255.9 89.2L259.7 89.6L259.7 83.8L258.8 78.3L263.5 79.8L263.5 86.3L267.3 83.3L276.8 79.8L278.7 79.8L288.2 77.2L292.0 71.8L298.7 74.6L303.4 77.2L306.2 79.8L303.4 72.9L303.4 65.0L307.2 54.0L313.8 54.0L314.4 65.0L312.9 78.8L315.7 86.3L312.9 89.6L316.7 83.8L317.6 77.2L320.5 76.2L316.7 65.0L318.6 55.9L324.3 57.8L329.0 59.1L331.9 67.9L333.8 62.1L329.0 49.4L339.5 46.1L341.4 38.9L356.6 29.8L373.6 17.2L390.7 31.4L379.3 49.4L388.8 47.4L391.7 50.8L402.1 52.7L410.7 51.4L417.3 55.9L422.1 65.0L424.9 66.2L428.7 61.5L440.1 62.1L442.0 55.9L453.4 57.2L461.0 62.1L464.8 65.6L478.1 66.2L480.0 72.4L491.4 73.5L491.4 116.2L485.7 123.6L483.8 133.9L479.8 137.2L476.7 143.5L473.7 146.9L471.6 137.2L472.4 130.6L474.3 124.3L480.0 118.1L483.8 114.3L486.2 107.2L480.0 109.2L474.3 110.4L470.5 118.9L462.5 117.8L458.1 118.9L451.5 118.9L446.7 120.0L442.0 125.4L438.2 128.9L437.2 134.6L438.2 137.9L442.9 138.8L444.5 139.8L443.9 143.5L442.9 149.6L442.6 153.9L439.1 158.2L436.3 162.3L433.4 166.3L429.6 169.2L426.8 168.4L424.3 170.7L422.6 174.0L420.2 176.5L418.3 177.3L418.3 179.0L420.2 180.7L421.9 183.8L422.1 187.1L421.1 188.5L418.3 189.2L416.2 189.6L416.4 187.3L416.7 184.3L416.0 182.6L413.5 181.4L414.1 178.2L412.4 176.8L409.7 177.5L406.9 179.2L407.8 175.3L405.9 174.3L403.1 177.0L400.2 178.5L399.7 179.9L401.7 181.9L403.1 183.3L405.5 181.9L408.8 182.8L407.8 184.0L405.0 185.9L402.7 188.3L404.6 190.3L405.7 193.7L407.6 196.0L407.6 197.8L405.7 199.1L407.8 200.2L407.1 203.4L405.3 204.7L403.5 208.4L402.1 210.0L400.2 211.7L397.8 214.0L393.2 215.8L391.7 216.3L388.3 217.5L385.8 218.1L385.4 220.1L384.5 217.7L381.8 217.5L379.0 219.1L377.1 222.1L378.4 225.1L380.7 227.9L382.9 230.1L383.7 234.0L383.5 236.9L381.2 238.7L379.3 239.6L378.4 241.4L375.9 242.9L375.4 240.8L374.6 239.6L372.7 239.3L371.6 237.1L369.8 235.6L367.8 235.2L367.8 233.6L366.0 234.0L365.9 236.5L364.5 239.5L364.7 241.8L366.6 243.5L367.0 245.8L369.3 246.6L370.4 247.9L372.5 250.6L372.5 253.8L374.0 256.7L372.7 257.0L370.8 255.5L368.5 253.8L367.4 251.5L366.6 249.0L366.4 247.1L365.3 245.8L362.8 244.3L363.2 241.4L363.4 238.5L363.6 235.6L362.6 232.7L361.7 229.7L361.5 227.7L360.0 226.7L357.1 229.1L355.2 228.7L355.6 225.7L355.2 223.1L353.7 221.1L351.4 218.7L350.5 216.1L348.2 215.6L345.2 217.1L343.3 217.3L341.4 217.9L341.0 219.7L338.5 221.3L336.2 223.6L332.8 226.7L330.5 228.3L328.5 230.1L328.3 233.6L327.9 236.5L327.7 239.8L326.2 241.8L324.7 242.5L323.3 244.1L321.4 242.3L320.5 239.5L319.0 236.5L317.8 233.6L316.9 230.7L315.5 227.7L314.8 224.8L314.4 222.3L314.2 219.7L314.0 217.7L313.3 218.7L311.0 219.3L309.5 218.7L307.2 216.1L309.1 215.2L306.2 214.0L304.2 212.5L302.8 210.7L302.5 209.6L298.7 210.0L293.9 210.2L291.1 209.8L287.8 209.4L285.0 209.0L284.0 206.2L281.6 206.9L278.7 207.1L275.9 205.2L273.6 204.3L272.5 201.7L271.1 199.5L269.2 198.9L268.3 199.7L267.1 200.8L268.3 203.0L269.0 204.9L271.1 207.1L271.5 209.2L272.6 210.9L272.6 209.4L273.4 208.1L274.2 209.4L274.0 211.3L274.9 212.3L277.8 212.3L279.7 211.7L281.6 209.6L282.7 208.1L283.3 210.5L284.0 212.1L287.3 213.4L289.7 215.6L287.8 219.7L285.9 222.7L283.1 225.0L280.6 226.7L277.8 227.3L275.3 229.5L272.1 230.7L269.2 232.1L266.4 233.4L261.6 235.0L258.8 235.2L258.2 233.6L257.5 230.7L257.3 227.9L255.6 225.1L254.0 222.7L251.8 220.1L250.4 217.7L249.3 213.6L247.2 211.7L245.7 208.4L243.6 205.2L242.5 203.9L242.6 200.8L241.7 203.4L241.3 204.5L240.0 203.4L239.2 201.9L238.1 200.0L237.5 197.1L239.8 197.3L241.3 196.9L242.3 194.9L242.6 193.1L243.8 190.1L244.4 188.0L244.5 186.2L244.9 184.5L243.2 184.7L240.7 185.4L238.5 186.2L236.0 184.7L234.3 184.3L232.2 185.7L229.7 184.5L228.2 183.8L227.8 181.4L226.5 180.2L227.3 178.5L225.9 177.7L225.9 176.3L228.4 175.5L231.3 175.3L231.6 173.8L231.1 174.0L228.4 174.0L226.5 175.3L225.6 174.5L223.7 174.3L221.8 174.8L221.8 176.3L220.8 175.8L219.7 175.3L219.3 177.3L220.2 178.7L219.9 179.7L221.8 181.4L221.8 182.1L220.2 181.6L220.2 183.1L219.5 185.0L218.7 185.0L217.4 184.3L216.6 181.9L217.6 180.7L216.1 179.5L214.7 177.7L213.0 175.3L213.2 172.8L212.3 171.2L210.4 169.7L208.5 168.4L206.2 166.8L204.7 164.7L203.3 162.8L202.0 163.9L202.0 161.7L199.7 162.5L199.6 165.0L201.8 167.3L203.2 170.2L205.2 171.7L207.0 171.7L206.6 173.0L208.9 174.0L211.3 176.0L210.9 177.0L208.5 175.3L207.7 177.3L208.9 179.0L207.5 180.4L206.6 181.6L205.9 181.4L206.2 179.9L206.8 178.5L205.8 176.5L204.3 175.0L203.2 174.5L200.9 173.5L199.4 172.2L197.1 170.5L196.1 168.9L195.6 166.6L193.3 165.2L191.4 166.6L190.2 167.1L188.7 168.4L186.5 168.1L184.2 167.6L182.3 168.4L182.1 170.5L182.3 171.7L180.4 173.0L177.7 174.5L175.8 177.3L175.6 178.0L176.6 179.5L175.3 180.7L174.9 182.4L172.8 183.3L171.8 184.3L167.8 184.5L166.1 185.9ZM238.1 200.0L238.3 203.0L240.0 204.9L241.1 207.3L242.6 210.9L244.0 213.4L246.3 216.7L246.8 219.3L247.0 222.7L249.3 224.8L250.8 229.1L252.7 231.1L255.4 233.6L258.2 235.6L258.4 237.3L260.7 239.5L264.5 238.9L269.2 237.9L273.2 236.7L273.2 239.5L272.1 242.3L270.2 246.2L268.3 250.0L265.4 253.2L262.4 255.7L258.8 259.1L255.2 262.9L252.5 264.8L251.6 267.3L250.2 270.0L250.8 272.4L251.2 275.7L251.8 278.6L253.1 280.1L253.3 284.4L253.5 288.3L251.2 291.3L247.4 293.5L245.5 295.9L242.6 298.1L243.2 301.3L243.6 305.4L243.4 307.5L238.9 309.6L238.5 312.8L236.0 317.1L233.2 325.9L204.7 325.9L204.7 312.8L203.7 303.4L201.8 299.3L199.9 295.2L198.6 292.7L198.6 289.9L199.9 286.3L201.6 283.4L202.4 280.5L201.3 276.7L200.5 272.8L199.4 270.9L199.0 269.0L197.5 267.1L195.2 264.8L193.9 262.9L192.9 260.8L194.2 259.1L194.2 257.6L194.8 255.1L194.8 253.4L194.4 252.1L193.1 250.9L192.0 250.9L189.5 251.1L187.6 251.3L186.3 249.0L184.7 247.5L182.7 247.3L180.0 247.5L178.5 247.9L176.2 248.7L174.3 249.6L172.4 250.4L170.3 249.8L167.7 249.6L164.8 250.4L162.0 251.1L159.1 249.6L155.7 247.5L154.4 246.4L152.5 245.2L151.1 243.3L150.9 241.6L148.7 239.5L147.7 238.5L145.8 236.9L144.5 235.8L144.3 233.8L143.0 231.3L144.7 228.7L144.9 227.3L145.8 224.8L145.4 222.1L144.9 219.7L143.9 218.7L144.3 216.3L145.8 213.2L147.9 209.8L148.9 207.7L151.1 204.9L151.7 204.3L154.4 203.2L157.2 200.8L157.8 198.9L157.6 196.4L158.7 194.0L160.1 192.4L161.8 191.7L163.3 190.6L164.4 188.0L165.0 186.6L166.1 186.4L168.0 188.0L170.5 187.8L172.4 188.3L174.3 186.9L176.4 186.2L178.7 185.0L181.9 184.3L183.8 184.0L186.6 184.3L189.5 183.6L192.5 184.0L194.8 183.1L195.8 184.3L197.3 183.6L196.3 185.2L196.3 186.9L197.3 188.0L195.4 190.1L196.9 191.7L198.0 192.6L199.9 193.5L201.3 193.3L203.7 194.2L205.2 194.6L205.8 196.4L208.5 197.5L211.3 198.9L213.2 199.1L214.2 197.8L214.2 195.3L215.7 193.7L218.0 193.3L220.2 194.4L223.7 196.0L225.6 196.4L228.4 197.1L231.3 197.8L233.2 197.1L235.1 196.2L237.0 196.7L237.5 197.1ZM269.8 282.5L271.5 285.4L272.1 289.3L270.6 290.3L270.2 293.3L269.2 296.3L268.1 300.3L266.8 304.4L265.4 308.5L262.0 309.6L259.7 307.5L258.4 303.4L259.2 300.3L260.5 297.9L260.3 295.2L259.7 292.3L261.3 290.7L264.1 289.7L266.4 287.9L267.3 285.6L268.8 283.8ZM328.1 240.8L330.4 243.3L331.7 245.8L330.9 247.5L329.0 248.3L327.9 247.1L327.7 244.3L328.1 242.3ZM29.4 243.1L30.4 244.1L31.3 242.5L32.7 241.2L32.9 239.3L34.2 238.3L35.5 237.9L37.6 237.5L39.1 236.5L40.8 235.8L40.5 237.5L39.7 238.5L40.5 239.5L41.4 238.1L42.9 237.5L43.3 236.2L44.1 237.5L46.5 238.5L47.1 239.5L50.9 239.3L52.8 240.2L54.7 239.5L57.5 239.1L58.7 239.1L57.5 240.0L60.4 241.4L61.3 243.3L62.7 243.7L64.2 244.6L65.3 246.4L67.6 248.1L71.4 248.3L73.7 248.7L76.5 250.0L78.0 251.3L79.4 252.9L79.8 254.8L81.3 256.1L81.3 258.0L80.3 259.5L83.2 259.9L84.1 260.8L87.0 260.8L89.8 262.2L91.7 263.7L92.1 264.6L94.6 264.1L97.4 265.0L100.3 264.8L103.1 266.5L105.4 268.4L107.9 269.2L109.2 269.6L109.4 270.5L110.1 272.8L109.9 274.9L109.0 277.2L107.1 279.5L105.6 281.5L103.1 284.4L102.2 287.3L102.2 290.3L101.8 293.7L100.8 295.2L100.6 297.5L99.7 298.9L98.4 301.3L98.4 302.3L96.5 304.2L94.2 304.4L91.7 305.0L89.8 306.0L88.1 306.5L86.0 308.1L84.1 310.6L84.1 325.9L41.4 325.9L42.5 310.6L42.5 305.4L42.9 300.3L42.9 297.3L42.7 295.0L40.6 293.3L38.6 291.9L34.8 289.9L32.3 287.9L31.3 286.2L29.8 282.6L28.7 280.5L27.5 278.2L26.2 275.1L24.5 272.4L22.6 270.9L22.0 269.0L21.9 268.1L23.4 266.1L24.3 265.2L24.5 263.9L22.6 263.9L22.8 261.4L24.1 259.5L24.3 258.0L26.4 256.8L27.0 255.1L29.1 254.2L29.6 252.1L29.3 249.0L29.3 246.8L28.3 245.8ZM29.4 243.1L28.5 242.3L27.2 241.6L25.3 241.2L24.3 242.0L22.4 242.7L20.9 242.3L20.1 242.0L18.6 240.4L17.5 238.9L17.3 237.5L17.5 235.6L17.9 232.7L18.2 230.7L16.7 229.3L14.8 228.9L12.9 228.9L11.0 229.1L9.1 229.1L7.4 228.9L8.2 227.7L8.8 225.7L8.8 223.8L9.5 224.2L10.1 221.7L10.3 219.7L11.0 217.7L9.1 217.5L5.3 218.3L-4.2 220.7L-4.2 232.7L1.2 231.7L2.5 232.3L5.3 233.0L7.2 233.8L9.1 234.2L10.1 234.8L12.0 236.9L13.3 238.5L13.5 240.4L14.6 241.2L15.4 241.0L17.3 242.3L17.7 243.3L18.8 244.1L20.1 243.9L21.5 244.8L22.6 245.8L23.9 245.4L23.8 243.9L24.7 243.3L26.2 242.3L27.5 243.7L27.7 245.0L28.3 245.8ZM15.0 216.9L16.7 215.2L19.0 214.4L22.0 214.4L24.3 214.8L27.2 216.1L29.6 217.3L31.9 218.3L35.3 220.1L33.8 220.9L29.1 220.9L29.6 219.5L27.2 218.7L24.7 217.3L21.5 216.5L19.6 215.4L17.1 216.3ZM35.0 223.6L36.9 220.9L38.6 220.9L40.5 220.9L43.3 221.3L45.2 222.1L46.3 223.6L45.2 224.0L42.4 224.4L40.5 225.3L39.5 224.4L36.7 224.4ZM27.5 224.0L30.0 223.8L31.5 224.8L30.0 225.1L27.5 224.6ZM48.6 223.8L51.5 224.0L51.3 224.8L48.6 224.8ZM58.7 240.2L59.4 238.9L60.6 238.9L60.4 240.2ZM-4.2 199.7L6.3 199.3L7.2 201.5L8.2 199.1L11.0 198.9L13.9 199.7L14.8 200.6L16.7 199.5L18.6 201.9L19.2 204.5L20.5 207.3L22.0 209.8L23.6 210.0L24.3 206.9L23.2 203.0L21.9 199.7L21.7 197.5L22.8 195.1L24.5 193.5L26.2 191.7L28.3 190.8L31.0 189.2L32.9 187.8L32.1 184.7L31.3 183.6L31.3 180.2L31.9 183.3L33.4 180.7L33.8 179.2L35.3 177.5L35.7 175.3L39.5 174.0L41.0 172.8L43.3 172.2L42.0 170.7L42.2 168.6L42.9 167.1L45.6 165.2L49.0 163.9L50.9 163.1L53.2 162.0L53.9 163.1L50.7 165.5L50.7 166.8L51.8 167.6L54.7 165.0L55.6 164.7L59.4 163.1L60.4 162.5L62.3 160.9L61.5 158.2L59.4 160.9L57.5 161.7L55.1 160.9L53.4 160.1L53.2 158.2L52.8 155.9L50.3 155.4L53.7 153.9L54.3 152.8L51.8 151.9L49.0 153.1L46.2 154.2L43.3 157.3L41.4 158.7L43.3 155.9L45.2 153.6L48.1 151.3L50.1 149.0L54.7 148.7L58.9 149.0L62.3 148.4L64.6 146.3L68.0 145.1L70.5 142.9L70.5 138.8L68.0 136.6L66.1 134.6L63.2 133.0L61.3 130.6L59.1 127.2L57.5 122.9L55.6 119.2L53.7 114.7L51.8 118.1L49.9 120.7L47.1 122.2L44.3 120.7L43.3 116.2L44.1 112.4L40.5 111.2L39.5 109.6L36.7 106.8L32.9 107.2L29.1 106.4L27.7 106.8L28.1 110.4L28.7 114.3L29.4 117.4L27.2 121.1L29.6 125.4L30.8 128.9L29.1 132.3L25.6 134.6L25.3 137.2L26.2 140.4L26.6 143.5L25.3 145.4L23.4 145.7L22.4 142.9L20.5 140.7L20.0 137.2L20.0 133.6L16.7 133.0L13.9 132.3L10.1 129.9L7.2 127.5L3.4 126.5L-4.2 123.6ZM63.6 156.5L65.3 153.9L66.1 151.0L67.2 148.1L68.6 145.7L70.8 144.8L70.3 147.2L68.9 149.6L70.8 149.9L71.8 151.6L74.1 151.3L74.6 153.9L75.6 153.9L76.1 156.8L75.2 159.0L73.7 158.4L73.7 156.8L71.8 158.4L69.9 157.9L70.8 156.5L67.0 156.5ZM5.3 47.4L9.1 48.8L14.8 47.4L22.4 48.1L23.4 55.9L30.0 54.0L35.7 60.3L40.5 63.9L45.2 67.9L48.1 73.5L49.0 78.8L54.7 82.3L58.5 86.3L59.4 88.2L56.6 93.4L52.8 92.0L47.1 88.7L51.8 97.0L53.7 102.2L52.8 105.1L46.2 101.3L49.9 108.8L47.1 107.6L43.3 105.1L39.5 101.3L35.7 98.3L31.9 98.7L27.2 97.9L29.1 94.3L34.8 94.7L36.7 89.6L37.6 84.8L36.7 79.8L32.9 76.2L28.1 72.4L25.3 69.1L20.5 71.8L14.8 70.7L11.0 67.9L7.2 65.0L6.3 55.9ZM11.0 94.7L14.8 91.1L16.7 93.8L21.5 99.2L23.8 101.3L19.6 101.3L17.7 103.5L13.9 103.5L11.0 101.3L12.9 97.9ZM-4.2 70.7L9.1 76.2L13.9 71.8L19.6 72.4L21.9 76.2L21.5 81.3L19.6 87.3L16.7 89.6L12.9 89.6L12.0 83.8L9.1 83.8L7.2 91.1L11.0 93.4L9.1 99.2L5.3 100.9L-4.2 104.3ZM197.1 -0.2L202.8 18.9L204.7 26.6L208.5 26.6L212.3 14.4L218.0 12.6L223.7 4.9L214.2 -5.5L204.7 -5.5ZM274.0 62.1L276.8 67.3L281.6 67.3L285.4 67.3L282.5 62.1L281.6 55.9L282.5 50.8L286.3 44.7L292.0 37.5L299.6 31.4L307.2 24.9L301.5 23.2L290.1 29.8L284.4 36.7L280.6 44.7L277.8 52.7L274.9 59.1ZM446.2 136.2L447.7 139.1L448.3 143.5L448.6 148.1L449.6 151.9L447.7 152.5L448.3 158.2L448.6 160.6L447.1 159.0L445.8 160.9L445.8 156.8L446.0 152.5L445.6 148.1L445.4 143.5L445.2 139.5ZM442.0 172.8L442.6 168.4L444.8 168.1L445.4 162.5L447.7 165.2L452.1 165.5L452.4 168.1L448.6 169.2L448.1 171.5L445.2 169.9L443.5 170.5L443.9 172.2ZM443.9 172.8L444.8 175.3L445.8 177.7L444.8 180.7L443.9 182.6L443.5 185.7L442.6 188.0L441.6 188.5L441.4 187.3L439.7 189.2L438.6 189.2L436.3 189.2L435.9 190.1L434.0 191.9L432.9 190.1L431.0 189.2L428.7 190.1L426.8 191.0L424.9 190.8L424.9 189.9L427.8 187.6L430.6 187.3L433.4 187.1L434.4 185.7L435.9 183.3L436.9 184.3L439.1 182.8L441.0 180.2L442.0 177.0L442.0 174.8L442.6 173.5ZM424.9 191.0L426.2 191.7L426.8 193.5L425.7 196.7L424.3 197.5L423.4 196.7L423.6 194.2L422.4 193.1L422.6 191.9L423.8 191.2ZM427.8 190.8L430.6 190.1L431.9 191.2L431.0 192.4L428.7 193.5L427.8 192.4ZM406.9 209.8L407.6 210.9L406.7 214.2L405.5 216.7L404.4 215.2L404.4 213.2L405.5 210.9ZM386.4 220.5L386.9 221.5L385.8 223.4L384.1 224.4L382.6 223.4L382.6 221.9L384.5 220.7ZM405.2 223.8L408.2 224.0L408.4 226.7L406.9 228.7L407.2 230.9L408.8 232.3L411.2 233.0L411.8 235.2L410.3 234.6L409.0 233.4L407.1 233.0L405.3 232.8L405.2 231.3L404.0 230.7L403.6 228.3L404.8 227.1L404.8 225.3ZM408.0 246.2L408.8 244.3L410.7 243.1L412.9 243.1L414.5 241.0L416.0 242.7L416.4 245.8L415.8 247.5L414.3 248.7L413.9 246.6L412.0 247.5L411.6 245.4L409.7 245.2ZM410.3 236.9L413.5 235.6L414.8 238.1L414.1 240.0L412.9 240.0L412.4 238.9L410.7 239.8L410.1 242.0L408.8 241.2L409.3 238.9L407.8 239.3L407.8 237.1ZM403.1 237.9L402.5 239.6L400.2 242.3L398.7 243.5L399.5 242.0L401.6 239.6ZM384.3 255.7L385.6 256.3L387.5 254.8L390.5 253.6L392.4 251.1L394.5 250.0L396.4 248.1L397.9 246.2L399.5 247.1L402.5 249.4L400.6 251.3L399.7 253.2L401.7 257.2L399.8 258.0L399.3 261.0L397.4 262.3L397.0 265.6L395.5 266.7L393.6 267.3L391.7 265.8L389.8 266.0L387.9 265.2L385.4 264.8L385.0 262.3L383.5 260.4L383.1 257.6ZM357.1 248.9L360.4 249.6L362.8 251.7L365.7 253.8L367.6 255.5L370.2 257.6L372.7 258.9L373.3 261.4L374.6 262.9L377.1 264.8L377.4 265.8L377.3 270.5L374.8 270.5L372.7 268.6L370.4 266.9L367.9 264.2L366.6 261.4L364.5 259.1L363.6 256.3L361.5 254.8L360.0 252.5L357.5 250.4ZM375.9 272.4L377.4 270.7L379.3 270.9L381.8 271.5L382.8 272.4L386.0 272.6L386.9 271.7L390.0 272.6L391.7 274.2L393.6 274.4L393.4 276.1L390.7 275.3L386.9 275.1L384.1 274.2L381.2 274.4L378.4 273.6ZM393.6 274.9L395.9 275.3L397.8 275.5L399.8 275.1L401.2 275.3L402.1 275.9L400.6 276.3L398.3 276.7L396.4 276.5L394.9 276.3ZM403.6 275.5L405.9 275.5L409.3 275.1L409.7 275.5L407.8 276.5L405.0 276.3L403.6 276.3ZM402.1 277.6L404.4 277.4L405.5 278.6L404.0 279.2L402.5 278.2ZM410.7 279.2L412.4 277.4L414.5 276.1L417.3 275.5L417.7 276.1L414.5 277.6L412.6 279.0ZM403.6 258.0L405.5 257.0L408.8 257.6L412.6 256.7L413.9 256.7L412.6 258.7L409.7 258.6L406.9 258.6L404.4 259.1L404.0 261.0L406.3 261.4L409.3 261.2L410.3 261.4L407.8 262.7L407.2 263.7L408.8 265.8L410.1 268.1L409.1 268.4L407.8 268.2L406.9 267.1L405.7 264.8L404.6 265.2L404.8 268.6L404.8 270.1L403.1 270.0L403.3 267.7L403.1 266.1L401.7 264.6L402.7 262.0L403.6 259.7ZM418.3 255.7L419.2 256.7L420.5 256.7L419.8 258.6L420.2 260.4L418.8 260.1L418.8 258.0L418.1 257.6ZM419.2 265.2L422.1 264.8L424.5 265.6L424.0 266.5L421.1 266.0L419.2 266.0ZM415.4 265.6L417.3 265.4L417.7 266.3L416.4 266.7L415.4 266.1ZM424.9 261.0L427.8 260.3L430.6 261.0L431.0 263.3L432.5 265.8L434.4 263.9L437.8 262.3L440.1 263.3L443.9 264.4L447.7 266.0L450.5 266.7L453.0 268.6L454.3 270.1L456.2 270.9L456.8 272.2L455.3 272.4L455.8 273.8L457.6 274.9L460.0 277.6L462.5 279.2L460.0 279.2L457.2 278.8L455.3 277.6L453.4 274.9L451.1 274.2L449.2 274.7L448.3 276.7L446.4 277.0L443.9 276.8L441.6 274.9L439.1 275.3L438.2 273.8L439.5 272.4L438.2 270.0L435.9 268.6L433.1 267.9L430.6 266.9L428.7 267.3L428.3 265.8L426.8 264.8L429.6 264.2L430.2 263.7L427.4 263.7L424.9 262.2ZM457.7 270.1L460.0 270.0L461.9 270.0L463.8 269.0L465.2 267.5L465.3 268.8L463.8 270.5L461.4 271.5L459.1 271.3ZM462.5 264.4L464.8 265.8L466.7 267.9L466.3 268.4L464.4 266.3L462.3 264.8ZM391.7 310.6L392.2 305.4L393.0 301.9L396.4 300.1L399.3 299.7L402.1 298.3L405.9 297.5L408.4 294.4L408.2 292.3L410.7 292.9L410.9 290.7L413.5 289.3L415.4 286.7L417.3 286.2L419.6 288.1L422.2 288.1L422.6 285.4L424.5 283.2L427.8 282.6L427.9 281.3L432.5 282.8L435.7 282.5L434.4 285.0L433.4 288.1L436.3 290.1L440.5 293.1L443.5 293.3L444.8 288.3L445.0 284.0L446.7 280.1L448.6 284.0L449.2 287.1L451.9 288.1L452.4 291.3L453.8 295.9L457.2 298.3L459.5 300.7L462.5 304.0L463.8 306.9L466.7 309.6L466.7 325.9L392.6 325.9ZM199.9 181.4L201.6 180.9L205.8 180.7L204.9 183.1L204.9 184.5L203.3 183.8L199.9 182.4ZM191.8 174.3L193.7 173.5L194.8 175.3L194.4 178.5L193.1 179.2L192.1 178.5L192.3 176.0ZM192.5 170.5L194.0 168.9L194.2 171.5L193.7 173.0L192.7 172.2ZM220.8 187.3L222.7 187.6L226.1 187.8L225.6 188.5L222.7 188.7L220.8 188.0ZM237.5 188.5L238.9 187.6L241.9 186.9L240.7 188.5L238.9 189.4L237.7 189.2ZM180.8 177.5L182.3 176.8L182.7 177.7L181.9 178.2ZM197.1 131.6L199.0 130.3L200.1 131.6L199.4 133.6L197.5 133.3ZM210.6 126.8L212.1 124.0L212.3 125.8L211.1 127.5ZM218.0 121.8L219.9 120.0L220.2 122.2L218.3 123.6ZM277.4 235.4L279.7 235.4L279.1 236.0L277.8 236.0ZM250.6 270.5L251.0 270.9L251.2 271.7L250.6 271.5ZM352.2 233.6L352.8 234.6L352.4 237.3L351.8 236.9L352.0 235.0ZM27.7 210.0L28.7 210.2L28.5 212.1L27.5 211.5ZM23.4 48.1L28.1 48.8L31.9 52.7L28.1 54.0L23.4 52.7ZM1.5 27.4L9.1 28.2L24.3 31.4L24.3 36.7L20.5 42.6L12.9 42.6L5.3 41.8L1.5 40.4ZM18.6 104.7L20.5 104.7L21.5 106.4L19.6 107.2L18.6 106.0ZM23.9 106.8L25.3 107.2L25.3 109.6L24.3 109.2ZM30.0 81.3L32.9 81.3L32.9 84.8L30.4 84.8ZM20.9 139.8L23.4 140.4L22.0 141.0ZM24.7 128.5L26.2 128.9L25.8 130.6L24.5 130.3ZM53.7 149.9L57.5 150.7L59.1 152.2L55.6 151.6ZM54.1 158.4L56.6 159.8L58.5 159.8L57.5 160.9L55.1 160.4ZM268.3 73.5L270.2 75.1L271.1 77.2L269.2 77.7L267.9 76.2ZM453.4 165.0L455.3 163.1L458.1 162.3L456.2 164.2ZM460.0 161.5L461.9 160.4L461.0 161.5ZM437.2 36.7L440.1 30.6L445.8 31.4L450.5 36.0L447.7 39.7L442.0 40.4ZM454.3 35.2L461.9 37.5L459.1 40.4L455.3 38.9ZM442.0 48.1L446.7 46.7L448.6 50.8L443.9 51.4Z" fill="#f2efe9" stroke="#f2efe9" stroke-width=".6" stroke-linejoin="round"/>
<path d="M159.3 171.7L160.6 171.5L163.7 171.7L164.4 172.5L163.1 174.0L162.9 177.3L162.0 177.5L162.9 180.9L162.0 182.6L162.2 183.3M172.8 167.9L174.9 169.2L177.5 169.4L179.4 170.2L182.3 170.5M190.4 166.8L189.5 165.5L189.5 163.1L189.1 161.5L189.5 161.2M189.1 161.5L187.6 160.4L187.8 159.5L189.5 156.8L190.6 156.5L191.8 152.5L190.4 151.9L188.4 151.0L187.2 151.0L185.3 149.6L184.2 148.7L182.3 147.2L180.9 146.3M182.7 145.4L184.7 145.4L187.2 146.0L187.8 147.5L188.4 148.7L187.8 149.3L188.4 151.0M187.8 147.5L187.6 144.1L189.1 143.8L189.5 142.3L189.9 139.8M189.5 161.2L192.3 160.4L193.9 159.8L195.9 159.3L196.1 158.4L199.4 158.2L199.7 159.0L202.2 159.5L202.0 161.7M190.6 156.5L192.5 156.2L194.4 156.8L196.1 156.8L196.1 158.4M196.1 156.8L200.9 156.8L200.9 154.5L202.4 153.1L199.4 149.0L203.3 146.6L204.7 146.6L204.1 142.6L203.3 137.5M204.7 146.6L208.3 148.4L211.9 150.7L214.2 151.6L219.1 152.2M202.4 153.1L204.7 152.5L208.3 153.4L208.7 155.1L207.5 157.0L206.8 158.4M202.2 159.5L206.8 158.4L207.7 159.8L212.1 161.2L212.5 163.9L213.4 166.3L212.7 167.6L211.3 170.2M208.7 155.1L211.9 155.9L215.1 153.9L218.3 154.2L219.7 155.4L219.1 152.2M219.7 155.4L216.4 159.8L214.7 160.4L212.1 161.2M214.7 160.4L217.0 163.1L218.9 164.4L219.3 165.8L221.8 167.1L227.5 166.0L230.5 167.1M219.7 155.4L223.5 156.2L226.7 154.5L229.7 159.3L229.7 162.3L232.6 163.1M226.7 154.5L231.4 155.6L233.2 159.8L229.7 162.3M219.3 165.8L218.7 169.4L219.7 173.3M213.0 171.7L215.1 171.0L215.3 174.0L214.2 177.3M215.3 174.0L219.7 173.3L222.7 172.8L226.1 172.2L229.4 171.5M225.6 174.5L226.1 172.2M219.1 152.2L221.8 148.1L221.0 144.8L221.0 141.7L221.6 137.5L220.8 137.2M213.8 135.9L219.5 135.9L220.8 137.2L225.0 136.2L227.1 133.0L226.7 131.6M216.1 130.3L223.5 129.2L226.7 131.6L229.7 130.3L228.8 126.1M222.5 124.0L225.6 124.3L228.8 126.1L228.2 121.1L229.4 118.1M221.0 144.8L227.5 145.1L234.3 145.7L236.6 143.2M229.7 130.3L234.9 131.9L234.7 134.6L238.3 139.1L236.6 143.2L241.5 144.1L243.8 148.4L248.3 149.9L252.3 150.7L251.8 155.6L248.9 157.6M197.5 120.4L199.2 115.5L199.6 110.4L199.4 104.3L202.6 97.9L203.7 90.6L207.3 83.8L210.8 78.8L215.1 75.6L221.2 81.8L220.8 90.1L222.1 92.0M215.1 75.6L225.0 76.2L225.6 72.4L229.4 70.2L231.3 75.6L234.7 72.9M231.3 75.6L230.3 80.3L233.2 82.8L231.3 86.8L233.3 92.4L232.6 96.1L234.1 99.2L236.2 104.7L232.8 111.2L229.0 114.3M192.5 134.3L195.0 134.6M162.3 133.9L160.6 135.6L162.3 136.9L164.4 136.9M252.1 167.9L256.9 168.4L260.7 169.7L264.3 171.7L266.9 173.5L268.3 172.0M255.0 172.8L257.8 173.5L258.8 173.8L261.6 173.3L264.5 173.8M258.8 173.8L259.2 176.3L261.3 177.3L264.5 179.2L267.3 177.3L269.0 180.4M261.3 177.3L260.3 180.4L261.3 183.3L256.7 183.3L252.1 184.3L246.4 184.5L244.9 186.2M261.3 183.3L263.5 186.6L262.4 190.8L263.9 192.6L267.1 195.8L266.8 197.5L268.3 199.7M256.7 183.3L254.4 188.9L249.9 192.2L250.6 194.9L252.9 195.5L255.9 197.3L261.1 201.5L264.5 201.7L266.4 201.9L267.1 200.8M264.5 201.7L266.4 203.0L268.1 203.0M250.6 194.9L246.4 196.4L248.3 198.6L247.4 199.7L244.7 201.5L242.6 201.1M249.9 192.2L246.1 194.6L244.2 193.7L243.8 192.4L245.7 190.3L244.5 189.4M241.3 196.9L242.5 200.8M243.8 193.7L243.6 196.4L242.6 200.8M257.5 227.9L258.4 225.7L262.0 225.9L265.4 226.7L267.7 224.4L274.9 222.7L280.6 220.7L281.9 216.7L281.0 215.2L276.1 214.8L274.2 212.1M281.0 215.2L282.1 212.5L283.3 210.7M274.9 222.7L277.0 227.3M278.5 183.1L282.9 181.2L284.8 180.9L288.8 182.6L292.4 184.7L292.4 187.1L291.1 190.8L291.8 196.4L293.5 196.7L291.8 200.0L295.4 203.4L296.2 206.7L293.5 207.9L293.1 210.0M291.8 200.0L294.9 201.1L302.1 200.0L302.8 197.1L307.8 195.5L309.1 192.6L311.2 190.6L312.1 186.4L317.6 183.8M292.4 187.1L296.0 186.6L298.7 185.4L302.5 182.8L305.3 183.8L308.1 182.4L309.5 182.4L310.8 180.4L312.1 184.5L316.3 182.8L318.4 183.3M302.5 182.8L297.7 179.2L293.9 175.3L290.1 172.0L287.3 169.7L284.4 173.3L282.5 173.3L282.5 163.6L287.5 162.0L292.0 165.2L293.9 167.6L299.4 167.1L301.7 168.9L301.5 171.5L305.3 173.8L307.2 173.0L310.0 171.2L311.0 170.7L315.7 170.5L315.9 168.9L320.1 169.2L326.2 169.4L328.5 171.0L322.4 174.0L315.9 177.7L310.0 177.5L308.0 177.7L304.9 178.5L305.3 183.8M275.9 172.2L279.7 171.5L282.5 173.3M308.0 177.7L310.2 176.0L310.0 174.0L314.8 174.8L311.9 176.0L315.9 177.7M315.9 177.7L318.4 180.4L318.4 183.3M269.2 159.5L268.3 155.9L265.4 154.8L265.0 151.6L268.8 149.6L272.6 144.4L279.7 146.6L285.4 146.6L289.4 147.8L292.8 146.6L292.0 140.7L293.0 137.2L299.6 135.9L307.0 133.0L311.2 136.6L315.7 137.2L322.0 135.9L321.6 137.5L328.1 147.2L334.5 146.6L338.1 150.7L341.9 151.9M341.9 151.9L339.1 158.2L333.8 157.6L332.4 162.3L329.6 163.4L328.5 171.0M341.9 151.9L350.9 147.5L362.3 149.6L362.8 143.5L370.2 145.7L370.4 147.8L379.3 150.4L386.0 151.9L393.2 149.0L397.8 150.2M341.9 151.9L348.8 163.1L357.3 165.8L359.2 169.7L368.9 170.2L375.5 172.5L385.8 169.7L388.6 167.1L388.5 163.6L395.9 162.5L397.6 160.1L403.5 159.0L399.8 156.5L395.5 155.6L397.8 150.2M397.8 150.2L402.5 149.3L405.3 141.7L410.9 138.8L415.4 142.0L418.3 150.2L424.3 152.8L424.1 156.2L431.9 154.5L428.9 163.4L425.5 163.9L424.9 169.2L424.1 170.5L419.2 171.5L417.1 172.0L412.4 176.5M415.6 181.9L420.0 179.9M318.4 183.3L324.3 187.3L326.2 190.1L326.0 194.4L325.6 197.1L330.0 199.3L336.1 202.1L339.5 204.1L343.5 204.3M328.3 202.4L330.4 203.2L334.3 205.4L337.6 206.9L343.5 207.5L343.5 204.3L345.0 205.6L346.1 203.7L350.1 204.5L351.1 206.4L346.7 206.9L345.0 205.6M350.1 204.5L354.7 201.9L358.8 201.3L360.9 203.7L363.6 205.2L363.6 210.9L361.3 212.5L364.0 214.2L365.1 214.8L364.5 216.5L368.3 217.7L369.5 215.8L370.2 215.8L373.5 215.6L376.1 214.0L378.8 215.0L378.8 216.7L381.2 217.7M370.2 215.8L371.7 219.1L374.6 219.9L373.6 221.5L375.9 223.8L378.6 226.7L380.3 231.1L380.3 235.6L377.3 237.3L374.6 239.6M368.3 217.7L366.2 220.1L367.0 221.7L368.3 221.7L367.9 225.5L370.0 224.4L372.5 224.0L375.0 225.9L375.2 228.1L376.7 229.5L376.5 231.7L380.3 231.1M376.5 231.7L375.2 231.9L371.7 232.3L370.6 233.4L371.6 237.1M366.2 220.1L362.3 221.3L361.3 223.8L364.0 227.9L362.6 230.3L364.5 234.2L365.3 236.9L363.8 240.0M366.4 247.1L368.1 248.7L370.0 247.7M323.9 187.3L317.3 189.2L317.3 193.1L319.3 194.6L317.4 197.5L316.5 199.7L312.7 204.3L309.9 204.1L308.1 206.2L310.6 209.0L311.0 211.7L306.8 211.9L305.7 213.2M343.5 207.5L343.5 211.5L344.8 211.9L344.6 214.2L345.2 217.1M343.5 207.5L346.7 208.4L346.7 209.8L351.6 210.5L349.5 212.5L349.3 213.6L350.7 214.0L351.4 217.9L351.4 219.3M360.9 203.7L358.5 205.8L356.7 207.3L355.8 210.0L353.5 212.5L353.3 214.6L352.0 216.9L351.4 217.9M384.3 255.7L386.0 257.8L388.8 256.8L392.2 257.0L394.5 254.8L395.5 251.5L399.3 251.5M443.9 264.4L443.9 276.8M411.8 277.4L413.5 276.7L413.7 277.6M172.0 188.3L172.8 189.6L173.9 194.6L169.4 196.0L169.2 197.8L165.8 200.0L159.7 202.6L159.7 205.6M159.7 204.7L151.1 204.7M159.7 205.6L159.7 208.4L153.4 208.4L153.4 213.6L151.5 214.6L151.5 218.1L143.9 218.1M159.7 205.6L167.1 210.5L163.9 210.5L165.8 227.7L166.1 228.1L165.6 229.7L158.5 229.7L155.5 230.5L154.4 229.5L153.0 231.1L150.9 229.7L148.7 227.5L144.9 228.5M153.0 231.1L154.6 235.8L150.2 235.2L147.7 238.5M150.2 235.2L147.0 235.2L144.5 235.8M144.3 233.4L147.7 233.0L150.0 233.8L147.7 234.2L144.3 234.4M154.6 235.8L159.1 235.8L161.0 240.0L160.1 245.0L158.2 245.4L156.6 243.3L155.3 240.4L150.9 242.3M156.6 243.3L154.4 246.4M160.1 245.0L160.3 247.1L162.0 248.5L162.0 251.1M161.0 240.0L164.4 239.1L165.8 239.6L170.9 240.6L171.1 244.3L170.1 247.1L170.3 249.8M165.8 239.6L165.8 236.5L167.8 235.2L168.6 233.8L170.7 231.5L174.9 230.5L176.6 230.7L182.8 229.9L184.2 226.9L184.2 222.5L182.3 222.5L182.5 221.1L178.5 219.3L178.5 218.5L167.1 210.5M170.9 240.6L170.9 238.5L175.8 238.3L177.1 243.3L178.5 247.9M175.8 238.3L177.9 238.5L179.2 242.3L179.2 247.5M177.9 238.5L180.8 236.7L183.0 237.1L181.5 242.3L181.3 247.3M176.6 230.7L178.1 233.8L180.8 236.7M183.0 237.1L183.8 233.6L189.3 234.4L193.3 235.0L200.9 233.6L202.0 233.2L203.0 234.4L203.9 235.2L201.5 240.2L198.0 246.9L194.8 246.6L192.5 250.4M182.5 221.1L187.6 221.5L190.4 218.9L199.0 213.6L203.2 215.4L204.7 214.6L221.8 221.7L221.8 229.3L219.7 229.7L218.9 232.7L217.6 235.2L219.7 238.7M202.0 233.2L205.6 226.9L205.6 218.7L204.7 214.6M199.0 213.6L195.2 211.5L194.2 207.7L195.0 204.1L194.2 199.3L193.3 195.1L190.4 191.2L192.0 188.5L192.5 184.0M194.2 199.3L195.8 196.0L198.0 194.2L198.0 192.6M223.7 196.2L223.7 216.7L246.3 216.7M223.7 216.7L223.7 220.7L221.8 220.7L221.8 221.7M219.7 238.7L217.4 239.3L212.3 242.3L211.5 244.1L205.6 245.2L203.7 247.7L203.7 250.2L207.0 255.3L201.5 255.3L194.8 255.1M203.9 235.2L204.7 238.5L204.9 240.4L202.8 240.4L205.6 245.2M197.7 255.1L197.7 257.6L194.4 257.6M201.5 255.3L203.7 256.8L202.8 259.5L203.7 260.6L203.5 263.3L199.9 263.9L198.8 266.3L197.5 267.1M207.0 255.3L207.7 252.9L211.5 252.9L211.3 251.3L213.0 249.8L218.7 251.7L224.2 250.0L228.2 249.8L232.2 251.1L234.7 252.9L235.6 255.3L232.6 258.0L232.4 262.2L231.3 264.6L231.6 266.0M211.5 252.9L210.0 258.9L207.0 263.7L206.6 266.7L203.9 268.8L201.1 268.2L199.4 270.5L201.1 270.7L207.7 270.7L208.5 273.4L213.0 272.8L213.2 274.7L217.6 273.4L217.8 277.8L218.5 280.9L221.8 280.3L221.6 282.5L218.0 284.4L218.0 290.7L220.6 293.5M219.7 238.7L221.2 242.9L223.9 244.6L228.2 249.8M221.2 242.9L225.4 239.6L229.4 241.8L237.5 236.7L239.2 236.2L238.9 239.3L240.9 241.4L241.3 239.1L243.0 236.0L244.9 234.6L245.5 232.1L246.8 226.5L249.5 224.8M245.5 232.1L249.3 231.7L252.5 231.9L256.7 235.6L258.0 235.2M256.7 235.6L255.6 238.5L257.6 238.7L258.4 237.5M257.6 238.7L259.7 242.3L265.4 244.3L267.3 244.3L261.6 250.0L255.9 251.7L255.7 252.1L251.2 253.0L248.3 252.7L244.5 251.1L244.4 250.8L242.6 249.2L238.9 244.3L240.9 241.4M255.7 252.1L254.0 254.2L254.0 259.5L255.2 262.7M244.4 250.8L240.7 251.5L241.5 252.5L242.6 256.1L240.7 259.1L240.6 261.4L247.8 265.4L250.6 268.4M240.7 251.5L235.1 252.5L234.7 252.9M240.6 261.4L234.1 261.4L234.7 264.1L233.9 265.0L234.7 265.8L232.0 268.1M232.4 262.2L234.1 261.4M231.3 264.6L233.9 265.0M234.7 275.3L238.7 277.4L240.7 277.6M242.5 281.7L247.4 281.9L252.9 279.5M234.7 275.3L231.1 275.7L230.1 277.2L230.5 279.5L230.1 282.1L231.3 283.2L232.8 285.2L231.6 285.2L227.8 281.7L222.3 281.1L221.8 280.3M198.6 292.7L202.8 293.1L211.3 293.1L220.6 293.5L224.2 293.9L227.5 294.0L231.1 290.3L233.9 289.5L233.5 287.9L239.2 286.3L238.9 282.5L239.4 278.6L238.7 277.4M239.2 286.3L241.7 287.3L244.2 290.3L243.0 292.3L241.5 290.9M233.9 289.5L238.7 291.7L238.5 296.3L237.7 300.9L235.6 303.2L232.0 302.7L228.8 300.3L224.2 293.9M220.6 293.5L216.1 294.8L216.1 302.3L214.2 302.3L214.2 308.1M232.0 302.7L227.5 305.8L225.4 307.9M235.6 303.2L237.0 307.5L237.0 310.6M40.8 236.2L38.6 238.3L37.6 241.8L38.7 243.5L39.3 245.4L43.1 246.2L44.4 247.9L48.1 247.7L47.5 250.9L48.4 253.0L47.5 254.2L49.0 257.2L43.7 256.3L44.4 257.4L43.3 259.9L44.4 261.4L43.5 267.5M26.4 256.8L29.1 258.7L33.2 259.7L34.2 259.9L37.6 263.9L43.1 264.6L42.0 266.7L43.5 267.5L37.8 269.4L35.9 273.6L37.8 276.8L39.1 278.6L42.4 277.6L42.2 280.5L44.3 280.3L45.8 283.4L45.2 287.3L44.4 289.5L45.2 291.3L44.3 293.1L42.7 295.0M33.2 259.7L33.1 261.4L30.8 264.4L27.7 266.0L27.2 268.2L25.1 268.1L23.8 266.0M44.3 293.1L45.4 296.3L46.2 300.1L47.3 304.0L48.6 304.0L50.5 301.9L54.1 304.0L57.2 302.7L58.1 299.3L58.9 297.5L64.0 296.9L65.7 297.9L66.3 302.5L70.3 302.9L71.0 306.3L73.1 306.5L72.5 309.6M44.3 280.3L46.2 280.5L52.0 278.2L52.2 281.5L53.9 283.2L57.0 284.4L61.3 285.8L61.9 290.9L65.3 290.9L65.7 293.1L67.0 294.4L65.7 297.9M57.2 302.7L60.4 306.0L66.5 309.0M49.0 257.2L50.9 258.0L51.8 257.6L54.3 256.7L55.8 255.1L54.3 252.1L57.0 251.9L60.4 250.9L61.0 249.6L59.6 248.3L62.3 243.5M61.0 249.6L62.3 250.0L62.7 252.7L62.5 255.1L64.6 257.2L68.0 255.9L69.9 255.3L72.5 255.1L75.8 255.3L78.0 251.7M68.0 255.9L67.4 253.2L66.1 251.9L67.6 248.3M72.5 255.1L73.3 252.9L73.7 248.7M18.8 244.1L19.4 241.4M13.5 238.3L17.3 238.7M10.3 234.6L11.6 233.0L14.8 231.3L18.2 230.7M9.5 233.8L6.7 231.9L8.8 229.3M40.1 221.3L39.9 224.8M33.8 163.6L40.5 163.6L42.7 161.2L43.3 159.0L44.8 157.0L47.1 157.3L47.5 161.7L49.0 163.9" fill="none" stroke="#c39fc8" stroke-width=".9" stroke-linejoin="round" opacity=".5" clip-path="url(#landclip)"/>
<path d="M231.4 173.5L229.5 172.5L228.6 170.2L229.2 168.4L230.5 166.8L230.7 164.4L232.6 163.1L233.5 160.9L234.7 159.3L236.8 159.0L237.5 160.4L239.8 160.6L238.1 162.5L239.8 164.7L241.7 164.7L243.4 163.4L245.5 163.1L242.6 161.7L242.6 160.1L246.1 158.7L248.9 157.6L250.8 157.9L248.2 159.3L249.3 160.6L247.8 161.7L246.4 162.8L247.4 164.4L249.3 165.5L251.6 167.6L254.0 169.2L255.2 171.0L255.2 172.5L253.1 174.0L251.2 173.8L248.9 174.3L246.4 173.8L245.1 173.3L242.6 171.2L239.8 171.5L237.5 172.2L235.6 173.8L233.2 173.5ZM269.2 159.5L273.0 158.4L276.8 159.0L276.8 162.8L273.6 162.8L273.6 165.0L271.7 165.5L273.0 168.4L275.9 169.7L276.1 172.2L277.2 174.0L276.6 176.5L278.3 178.7L278.5 183.3L275.9 184.3L272.1 183.8L270.2 182.6L269.0 180.2L269.8 177.7L270.9 175.5L270.2 174.8L269.2 172.8L267.9 171.0L266.4 168.9L266.4 166.3L264.9 164.7L266.0 162.3L267.3 160.9ZM290.1 160.4L292.0 158.4L293.5 159.5L292.0 160.9ZM286.7 161.5L288.0 162.0L288.2 164.7L287.1 165.2ZM315.5 161.7L317.1 160.4L319.5 158.7L322.4 159.0L326.2 158.7L326.2 160.1L322.4 160.1L319.5 160.1L317.6 162.3L316.3 163.1ZM373.1 145.1L375.5 143.5L378.4 140.4L381.8 135.6L384.1 131.3L385.0 131.9L384.1 136.2L381.2 140.4L378.4 143.5L374.6 145.7ZM234.1 116.2L233.7 112.4L236.0 109.6L238.7 111.6L238.5 115.1L236.0 116.2ZM241.7 112.4L241.9 108.4L243.2 105.1L244.9 109.2L244.2 112.4ZM199.9 121.8L200.9 118.9L202.8 119.2L202.2 121.5ZM236.6 259.9L238.5 258.9L240.7 258.9L241.3 261.0L240.4 263.9L238.5 264.8L236.6 263.9L236.4 261.4ZM231.6 266.0L232.6 268.1L232.2 270.9L234.5 275.1L235.4 276.1L234.1 272.8L233.2 270.0L232.6 266.3ZM240.7 277.8L241.9 280.5L241.3 283.4L243.0 286.9L242.5 282.5L242.5 279.5ZM1.5 159.0L5.3 156.8L6.7 155.4L8.2 153.6L12.0 153.4L14.8 155.6L15.6 158.4L14.8 159.5L12.0 159.5L10.1 158.4L8.6 158.2L5.3 159.3ZM9.7 171.5L9.5 167.6L10.3 165.0L9.9 163.1L12.0 161.5L14.4 161.5L13.7 163.6L12.2 165.0L12.0 167.6L12.2 170.7L11.0 172.2ZM15.4 161.2L17.7 160.6L21.5 160.9L24.3 162.3L24.5 164.2L22.0 164.4L21.1 167.6L19.8 168.9L19.4 166.6L18.1 166.6L16.9 167.1L17.9 165.5L17.9 163.4L16.3 162.0ZM17.7 172.2L18.6 171.5L21.5 169.9L24.3 169.7L26.2 169.4L26.2 169.9L23.4 171.5L21.1 172.8L19.2 173.0ZM24.7 168.1L26.2 166.8L29.1 166.3L31.3 166.0L31.5 167.6L29.1 168.4L26.2 168.4ZM11.8 47.4L14.8 47.4L16.7 59.1L14.3 63.3L12.9 55.9ZM263.4 182.1L263.3 181.1L262.8 180.5L262.3 180.5L261.9 181.1L261.7 182.1L261.9 183.1L262.3 183.7L262.8 183.7L263.3 183.1ZM258.9 179.4L258.6 179.1L258.0 179.1L257.3 179.5L256.9 179.9L256.8 180.4L257.1 180.8L257.7 180.8L258.4 180.4L258.8 179.9ZM245.2 252.7L245.1 251.3L244.9 250.5L244.6 250.5L244.4 251.3L244.3 252.7L244.4 254.0L244.6 254.8L244.9 254.8L245.1 254.0ZM235.5 255.9L235.0 255.4L234.5 255.1L234.2 255.3L234.2 255.9L234.6 256.6L235.1 257.2L235.6 257.4L235.9 257.2L235.9 256.6ZM45.5 290.8L45.5 290.3L45.2 289.7L44.5 289.1L43.9 288.9L43.4 289.0L43.4 289.5L43.7 290.1L44.4 290.7L45.0 290.9ZM367.5 184.0L367.3 183.6L366.8 183.4L366.1 183.4L365.6 183.6L365.4 184.0L365.6 184.4L366.1 184.7L366.8 184.7L367.3 184.4ZM428.4 163.6L428.3 163.0L427.8 162.6L427.3 162.6L426.9 163.0L426.7 163.6L426.9 164.3L427.3 164.6L427.8 164.6L428.3 164.3ZM229.2 121.8L229.0 120.3L228.6 119.4L228.2 119.4L227.8 120.3L227.6 121.8L227.8 123.3L228.2 124.2L228.6 124.2L229.0 123.3ZM250.1 122.9L250.1 122.1L249.7 121.1L249.1 120.4L248.5 120.3L248.1 120.7L248.1 121.6L248.5 122.5L249.1 123.2L249.7 123.3ZM44.1 88.7L43.7 87.4L42.9 86.6L41.8 86.6L41.0 87.4L40.6 88.7L41.0 90.0L41.8 90.7L42.9 90.7L43.7 90.0ZM42.4 95.6L42.1 94.7L41.4 94.1L40.6 94.1L40.0 94.7L39.7 95.6L40.0 96.6L40.6 97.1L41.4 97.1L42.1 96.6ZM36.8 146.0L36.3 145.1L35.7 144.7L35.4 145.1L35.4 146.0L35.7 147.2L36.3 148.1L36.8 148.4L37.2 148.0L37.2 147.1ZM55.8 136.9L55.5 136.1L54.8 135.7L53.8 135.7L53.1 136.1L52.8 136.9L53.1 137.7L53.8 138.1L54.8 138.1L55.5 137.7ZM373.2 40.3L372.5 39.7L370.8 40.2L368.7 41.6L367.1 43.3L366.5 44.8L367.2 45.3L368.9 44.9L371.0 43.5L372.6 41.8ZM238.5 214.0L238.1 213.0L237.7 212.5L237.4 212.6L237.4 213.3L237.6 214.4L238.1 215.4L238.5 215.9L238.8 215.8L238.8 215.1ZM176.6 245.5L176.3 244.4L175.9 243.8L175.5 243.8L175.4 244.6L175.4 245.7L175.8 246.8L176.2 247.4L176.5 247.4L176.7 246.6ZM231.0 291.3L230.5 291.2L229.6 291.5L228.6 292.2L227.9 292.8L227.7 293.3L228.2 293.3L229.1 293.0L230.1 292.4L230.8 291.7ZM231.5 276.7L231.4 276.1L231.1 275.7L230.7 275.7L230.3 276.1L230.2 276.7L230.3 277.2L230.7 277.6L231.1 277.6L231.4 277.2ZM374.6 235.6L374.6 235.3L374.3 234.8L373.9 234.4L373.4 234.3L373.1 234.4L373.1 234.7L373.3 235.2L373.8 235.5L374.2 235.7ZM337.3 156.0L337.1 155.5L336.3 154.9L335.3 154.5L334.4 154.4L334.0 154.7L334.3 155.2L335.0 155.8L336.1 156.2L336.9 156.3ZM332.2 160.6L332.0 160.2L331.6 159.9L331.0 159.9L330.6 160.2L330.5 160.6L330.6 161.1L331.0 161.4L331.6 161.4L332.0 161.1ZM324.7 170.3L324.3 169.9L323.5 169.7L322.4 169.7L321.6 169.9L321.2 170.3L321.6 170.7L322.4 170.9L323.5 170.9L324.3 170.7ZM230.9 110.0L230.7 108.8L230.2 108.1L229.6 108.1L229.2 108.8L229.0 110.0L229.2 111.2L229.6 111.9L230.2 111.9L230.7 111.2ZM225.2 110.0L225.1 108.6L224.9 107.7L224.7 107.7L224.5 108.6L224.4 110.0L224.5 111.4L224.7 112.3L224.9 112.3L225.1 111.4ZM229.9 76.2L229.7 75.2L229.3 74.6L228.7 74.6L228.2 75.2L228.0 76.2L228.2 77.1L228.7 77.7L229.3 77.7L229.7 77.1ZM203.7 234.2L203.6 233.8L203.2 233.6L202.7 233.6L202.4 233.8L202.2 234.2L202.4 234.6L202.7 234.9L203.2 234.9L203.6 234.6ZM65.5 137.3L65.1 137.0L64.1 137.1L63.0 137.4L62.1 137.9L61.7 138.4L62.1 138.7L63.1 138.6L64.3 138.3L65.2 137.8ZM33.3 129.9L33.2 128.9L33.0 128.3L32.7 128.3L32.5 128.9L32.4 129.9L32.5 130.9L32.7 131.5L33.0 131.5L33.2 130.9ZM57.2 114.3L57.1 113.7L56.8 113.2L56.4 113.2L56.1 113.7L56.0 114.3L56.1 115.0L56.4 115.4L56.8 115.4L57.1 115.0ZM236.2 122.5L236.1 122.1L235.8 121.9L235.4 121.9L235.2 122.1L235.1 122.5L235.2 123.0L235.4 123.2L235.8 123.2L236.1 123.0ZM248.4 115.5L248.3 115.0L248.0 114.8L247.6 114.8L247.2 115.0L247.1 115.5L247.2 115.9L247.6 116.2L248.0 116.2L248.3 115.9ZM270.1 133.6L270.3 131.9L270.3 130.7L270.0 130.5L269.6 131.4L269.2 133.0L268.9 134.7L268.9 135.8L269.2 136.0L269.6 135.2ZM257.9 154.9L257.5 154.1L257.1 153.8L256.8 154.1L256.7 154.8L257.0 155.8L257.4 156.6L257.8 156.9L258.1 156.6L258.2 155.9ZM397.7 201.7L397.5 201.2L397.2 200.9L396.8 200.9L396.5 201.2L396.3 201.7L396.5 202.2L396.8 202.5L397.2 202.5L397.5 202.2ZM391.1 201.5L391.0 201.2L390.6 201.0L390.1 201.0L389.7 201.2L389.6 201.5L389.7 201.8L390.1 202.0L390.6 202.0L391.0 201.8ZM349.2 198.2L349.0 197.9L348.5 197.8L347.9 197.8L347.4 197.9L347.3 198.2L347.4 198.5L347.9 198.6L348.5 198.6L349.0 198.5ZM52.2 148.1L52.2 147.2L52.0 146.7L51.7 146.7L51.5 147.2L51.5 148.1L51.5 149.0L51.7 149.5L52.0 149.5L52.2 149.0ZM41.4 153.6L41.2 153.3L40.8 153.1L40.2 153.1L39.7 153.3L39.5 153.6L39.7 154.0L40.2 154.2L40.8 154.2L41.2 154.0ZM46.2 146.6L46.1 145.7L45.9 145.1L45.7 145.1L45.5 145.7L45.4 146.6L45.5 147.5L45.7 148.0L45.9 148.0L46.1 147.5ZM15.0 238.2L15.0 237.8L14.5 237.2L13.8 236.8L13.1 236.7L12.7 236.8L12.8 237.3L13.3 237.8L14.0 238.2L14.6 238.4ZM41.2 240.8L41.0 239.9L40.6 239.3L40.0 239.3L39.5 239.9L39.3 240.8L39.5 241.7L40.0 242.3L40.6 242.3L41.0 241.7Z" fill="#aad3df"/>
<path d="M417.3 57.2L416.4 65.0L412.6 73.5L410.7 81.3L411.2 88.7L415.4 97.9L422.1 103.5M313.8 89.2L307.2 91.1L301.5 89.6M332.8 63.9L333.8 70.7L339.5 74.6L342.3 83.8" fill="none" stroke="#aad3df" stroke-width="1" stroke-linejoin="round"/>
<path d="M-4.2 152.5L-3.4 153.4L0.6 154.2L6.3 155.4L8.6 154.5L15.2 158.4L16.5 159.5L17.7 160.9L19.6 162.8L20.3 167.3L19.6 169.9L18.4 171.2L19.6 172.2L24.3 170.7L26.4 169.4L26.0 167.9L30.4 167.3L31.2 166.0L33.8 163.6" fill="none" stroke="#b48bbd" stroke-width=".7" stroke-linejoin="round" opacity=".7"/></svg>
<svg class="abs" style="left:0;top:0" width="469" height="266"><defs><radialGradient id="gg"><stop offset="0" stop-color="#00e400" stop-opacity="0.85"/><stop offset=".76" stop-color="#00e400" stop-opacity="0.85"/><stop offset=".87" stop-color="#00e400" stop-opacity="0.95"/><stop offset="1" stop-color="#00e400" stop-opacity=".05"/></radialGradient>
<radialGradient id="gy"><stop offset="0" stop-color="#ffff00" stop-opacity="0.85"/><stop offset=".76" stop-color="#ffff00" stop-opacity="0.85"/><stop offset=".87" stop-color="#ffff00" stop-opacity="0.95"/><stop offset="1" stop-color="#ffff00" stop-opacity=".05"/></radialGradient>
<radialGradient id="go"><stop offset="0" stop-color="#ff7e00" stop-opacity="0.93"/><stop offset=".76" stop-color="#ff7e00" stop-opacity="0.93"/><stop offset=".87" stop-color="#ff7e00" stop-opacity="1.00"/><stop offset="1" stop-color="#ff7e00" stop-opacity=".05"/></radialGradient>
<radialGradient id="gr"><stop offset="0" stop-color="#ff0000" stop-opacity="0.8"/><stop offset=".76" stop-color="#ff0000" stop-opacity="0.8"/><stop offset=".87" stop-color="#ff0000" stop-opacity="0.90"/><stop offset="1" stop-color="#ff0000" stop-opacity=".05"/></radialGradient>
<radialGradient id="gp"><stop offset="0" stop-color="#9a1c7e" stop-opacity="0.9"/><stop offset=".76" stop-color="#9a1c7e" stop-opacity="0.9"/><stop offset=".87" stop-color="#9a1c7e" stop-opacity="1.00"/><stop offset="1" stop-color="#9a1c7e" stop-opacity=".05"/></radialGradient>
<radialGradient id="gm"><stop offset="0" stop-color="#7e0023" stop-opacity="0.9"/><stop offset=".76" stop-color="#7e0023" stop-opacity="0.9"/><stop offset=".87" stop-color="#7e0023" stop-opacity="1.00"/><stop offset="1" stop-color="#7e0023" stop-opacity=".05"/></radialGradient>
<radialGradient id="gn"><stop offset="0" stop-color="#999999" stop-opacity="0.85"/><stop offset=".76" stop-color="#999999" stop-opacity="0.85"/><stop offset=".87" stop-color="#999999" stop-opacity="0.95"/><stop offset="1" stop-color="#999999" stop-opacity=".05"/></radialGradient>
</defs>
<circle cx="-3.6" cy="190.8" r="10.8" fill="url(#gg)"/>
<circle cx="8.5" cy="199.9" r="10.8" fill="url(#gg)"/>
<circle cx="27.6" cy="209.9" r="10.8" fill="url(#gy)"/>
<circle cx="37.3" cy="195.7" r="10.8" fill="url(#gy)"/>
<circle cx="22.0" cy="241.8" r="10.8" fill="url(#go)"/>
<circle cx="142.2" cy="200.7" r="10.8" fill="url(#gn)"/>
<circle cx="153.0" cy="194.6" r="10.8" fill="url(#gr)"/>
<circle cx="159.7" cy="208.6" r="10.8" fill="url(#gy)"/>
<circle cx="167.8" cy="208.2" r="10.8" fill="url(#gy)"/>
<circle cx="174.0" cy="143.7" r="10.8" fill="url(#gr)"/>
<circle cx="203.1" cy="126.0" r="10.8" fill="url(#go)"/>
<circle cx="208.4" cy="129.1" r="10.8" fill="url(#go)"/>
<circle cx="196.8" cy="195.7" r="10.8" fill="url(#gy)"/>
<circle cx="230.0" cy="188.8" r="10.8" fill="url(#gy)"/>
<circle cx="230.1" cy="218.1" r="10.8" fill="url(#gy)"/>
<circle cx="241.8" cy="201.6" r="10.8" fill="url(#gn)"/>
<circle cx="241.9" cy="201.6" r="10.8" fill="url(#gy)"/>
<circle cx="242.6" cy="177.0" r="10.8" fill="url(#gy)"/>
<circle cx="236.4" cy="154.7" r="10.8" fill="url(#gn)"/>
<circle cx="252.5" cy="151.7" r="10.8" fill="url(#gr)"/>
<circle cx="256.9" cy="170.4" r="10.8" fill="url(#gn)"/>
<circle cx="259.3" cy="160.4" r="10.8" fill="url(#gr)"/>
<circle cx="264.2" cy="167.2" r="10.8" fill="url(#go)"/>
<circle cx="271.4" cy="170.9" r="10.8" fill="url(#gy)"/>
<circle cx="273.2" cy="169.3" r="10.8" fill="url(#gy)"/>
<circle cx="279.0" cy="140.8" r="10.8" fill="url(#go)"/>
<circle cx="303.8" cy="105.3" r="10.8" fill="url(#gg)"/>
<circle cx="295.4" cy="170.0" r="10.8" fill="url(#gy)"/>
<circle cx="299.6" cy="148.9" r="10.8" fill="url(#gy)"/>
<circle cx="309.8" cy="128.5" r="10.8" fill="url(#gr)"/>
<circle cx="299.6" cy="132.6" r="10.8" fill="url(#gr)"/>
<circle cx="298.8" cy="139.4" r="10.8" fill="url(#go)"/>
<circle cx="314.2" cy="127.6" r="10.8" fill="url(#gy)"/>
<circle cx="309.4" cy="155.7" r="10.8" fill="url(#gr)"/>
<circle cx="306.9" cy="150.8" r="10.8" fill="url(#gr)"/>
<circle cx="314.8" cy="162.1" r="10.8" fill="url(#gm)"/>
<circle cx="336.0" cy="174.8" r="10.8" fill="url(#gn)"/>
<circle cx="339.8" cy="172.3" r="10.8" fill="url(#gp)"/>
<circle cx="330.1" cy="164.0" r="10.8" fill="url(#go)"/>
<circle cx="317.2" cy="185.2" r="10.8" fill="url(#gr)"/>
<circle cx="306.6" cy="181.9" r="10.8" fill="url(#gr)"/>
<circle cx="320.6" cy="193.7" r="10.8" fill="url(#gy)"/>
<circle cx="319.8" cy="205.6" r="10.8" fill="url(#gy)"/>
<circle cx="350.8" cy="186.4" r="10.8" fill="url(#gy)"/>
<circle cx="369.1" cy="178.0" r="10.8" fill="url(#gr)"/>
<circle cx="363.0" cy="184.1" r="10.8" fill="url(#go)"/>
<circle cx="370.8" cy="198.2" r="10.8" fill="url(#gy)"/>
<circle cx="371.0" cy="230.6" r="10.8" fill="url(#go)"/>
<circle cx="383.2" cy="173.6" r="10.8" fill="url(#go)"/>
<circle cx="398.8" cy="156.3" r="10.8" fill="url(#gg)"/>
<circle cx="389.2" cy="136.1" r="10.8" fill="url(#gr)"/>
<circle cx="402.5" cy="131.3" r="10.8" fill="url(#go)"/>
<circle cx="371.1" cy="114.9" r="10.8" fill="url(#gr)"/>
<text transform="translate(8.5,201.3) scale(.83,1)" class="ml">23</text>
<text transform="translate(27.6,211.3) scale(.83,1)" class="ml">76</text>
<text transform="translate(37.3,197.1) scale(.83,1)" class="ml">61</text>
<text transform="translate(22.0,243.2) scale(.83,1)" class="ml">146</text>
<text transform="translate(142.2,202.1) scale(.83,1)" class="ml">N/A</text>
<text transform="translate(153.0,196.0) scale(.83,1)" class="ml">165</text>
<text transform="translate(159.7,210.0) scale(.83,1)" class="ml">83</text>
<text transform="translate(167.8,209.6) scale(.83,1)" class="ml">78</text>
<text transform="translate(174.0,145.1) scale(.83,1)" class="ml">152</text>
<text transform="translate(203.1,127.4) scale(.83,1)" class="ml">116</text>
<text transform="translate(208.4,130.5) scale(.83,1)" class="ml">118</text>
<text transform="translate(196.8,197.1) scale(.83,1)" class="ml">89</text>
<text transform="translate(230.0,190.2) scale(.83,1)" class="ml">58</text>
<text transform="translate(230.1,219.5) scale(.83,1)" class="ml">86</text>
<text transform="translate(241.8,203.0) scale(.83,1)" class="ml">N/A</text>
<text transform="translate(241.9,203.0) scale(.83,1)" class="ml">53</text>
<text transform="translate(242.6,178.4) scale(.83,1)" class="ml">68</text>
<text transform="translate(236.4,156.1) scale(.83,1)" class="ml">N/A</text>
<text transform="translate(252.5,153.1) scale(.83,1)" class="ml">151</text>
<text transform="translate(256.9,171.8) scale(.83,1)" class="ml">N/A</text>
<text transform="translate(259.3,161.8) scale(.83,1)" class="ml">152</text>
<text transform="translate(264.2,168.6) scale(.83,1)" class="ml">137</text>
<text transform="translate(271.4,172.3) scale(.83,1)" class="ml">79</text>
<text transform="translate(273.2,170.7) scale(.83,1)" class="ml">96</text>
<text transform="translate(279.0,142.2) scale(.83,1)" class="ml">122</text>
<text transform="translate(295.4,171.4) scale(.83,1)" class="ml">57</text>
<text transform="translate(299.6,150.3) scale(.83,1)" class="ml">0</text>
<text transform="translate(309.8,129.9) scale(.83,1)" class="ml">161</text>
<text transform="translate(299.6,134.0) scale(.83,1)" class="ml">160</text>
<text transform="translate(298.8,140.8) scale(.83,1)" class="ml">117</text>
<text transform="translate(314.2,129.0) scale(.83,1)" class="ml">92</text>
<text transform="translate(309.4,157.1) scale(.83,1)" class="ml">176</text>
<text transform="translate(306.9,152.2) scale(.83,1)" class="ml">167</text>
<text transform="translate(314.8,163.5) scale(.83,1)" class="ml">460</text>
<text transform="translate(336.0,176.2) scale(.83,1)" class="ml">N/A</text>
<text transform="translate(339.8,173.7) scale(.83,1)" class="ml">203</text>
<text transform="translate(330.1,165.4) scale(.83,1)" class="ml">133</text>
<text transform="translate(317.2,186.6) scale(.83,1)" class="ml">151</text>
<text transform="translate(306.6,183.3) scale(.83,1)" class="ml">155</text>
<text transform="translate(320.6,195.1) scale(.83,1)" class="ml">84</text>
<text transform="translate(319.8,207.0) scale(.83,1)" class="ml">93</text>
<text transform="translate(350.8,187.8) scale(.83,1)" class="ml">68</text>
<text transform="translate(369.1,179.4) scale(.83,1)" class="ml">158</text>
<text transform="translate(363.0,185.5) scale(.83,1)" class="ml">116</text>
<text transform="translate(370.8,199.6) scale(.83,1)" class="ml">87</text>
<text transform="translate(371.0,232.0) scale(.83,1)" class="ml">125</text>
<text transform="translate(383.2,175.0) scale(.83,1)" class="ml">110</text>
<text transform="translate(398.8,157.7) scale(.83,1)" class="ml">15</text>
<text transform="translate(389.2,137.5) scale(.83,1)" class="ml">164</text>
<text transform="translate(402.5,132.7) scale(.83,1)" class="ml">109</text>
<text transform="translate(371.1,116.3) scale(.83,1)" class="ml">193</text>
</svg>
<div id="pop" class="abs"><div class="arrow"></div>
<div style="position:absolute;left:0;top:10.5px;width:107px;line-height:10px">Bishkek<br>2020-11-04 7:00 PM<br>(LT)</div>
<div style="position:absolute;left:10px;top:40px;width:56px;height:19px;background:#004b87;color:#fff;font-weight:bold;line-height:18px">Pollutant</div>
<div style="position:absolute;left:66px;top:40px;width:31px;height:19px;background:#004b87;color:#fff;font-weight:bold;line-height:18px">AQI</div>
<div style="position:absolute;left:10px;top:59px;width:56px;height:20px;border:1px solid #004b87;border-top:0;background:#fff;line-height:18px;color:#333">PM2.5</div>
<div style="position:absolute;left:66px;top:59px;width:31px;height:20px;border:1px solid #004b87;border-top:0;border-left:0;background:#ff0000;color:#fff;font-weight:bold;line-height:18px">161</div>
</div>
</div>

<div class="abs sh" style="top:2px;height:23px;line-height:21.5px">Select a City</div>
<div class="abs sb" style="top:26px">Bishkek<span class="x">×</span><span class="c"></span></div>
<div class="abs sh" style="top:65px;height:23px;line-height:24px">Select a Parameter</div>
<div class="abs sb" style="top:89px">PM2.5<span class="x">×</span><span class="c"></span></div>
<div id="city" class="abs"><b>Bishkek</b>
<svg class="abs" style="left:192px;top:17px" width="23" height="23" viewBox="0 0 23 23"><rect width="23" height="23" fill="#f4b63f"/><circle cx="5" cy="18" r="2.3" fill="#fff"/><path d="M3 10.5 A9.5 9.5 0 0 1 12.5 20" stroke="#fff" stroke-width="2.6" fill="none"/><path d="M3 4.5 A15.5 15.5 0 0 1 18.5 20" stroke="#fff" stroke-width="2.6" fill="none"/></svg>
</div>
<div id="note" class="abs">Note: Values above 500 are considered Beyond the AQI. Follow recommendations for the Hazardous category. Additional information on reducing exposure to extremely high levels of particle pollution is available <b>here</b>.</div>

<div id="tabs" class="abs">
<div class="tab on" style="left:0;width:72px">AQI</div>
<div class="tab" style="left:74px;width:111px">Concentration</div>
<div class="tab" style="left:186.6px;width:92.4px">Historical</div>
</div>
<div id="learn" class="abs">Learn more about how the Air Quality Index [AQI] is calculated from the EPA <b>here</b>.</div>

<div id="chart" class="abs"></div>
<div id="ctitle" class="abs">Bishkek <span style="display:inline-block;transform:scaleX(1.25)">-</span> PM2.5</div>
<svg class="abs" style="left:0;top:0;pointer-events:none" width="740" height="583">
<line x1="58.46" x2="535.65" y1="409.2" y2="409.2" stroke="#e9e9e9" stroke-width="1"/>
<line x1="58.46" x2="535.65" y1="433.4" y2="433.4" stroke="#e9e9e9" stroke-width="1"/>
<line x1="58.46" x2="535.65" y1="457.7" y2="457.7" stroke="#e9e9e9" stroke-width="1"/>
<line x1="58.46" x2="535.65" y1="481.9" y2="481.9" stroke="#e9e9e9" stroke-width="1"/>
<line x1="58.46" x2="535.65" y1="506.2" y2="506.2" stroke="#e9e9e9" stroke-width="1"/>
<text x="48" y="531.2" class="yl">0</text>
<text x="48" y="507.2" class="yl">100</text>
<text x="48" y="483.1" class="yl">200</text>
<text x="48" y="459.1" class="yl">300</text>
<text x="48" y="435.0" class="yl">400</text>
<text x="48" y="411.0" class="yl">500</text>
<line x1="58.46" x2="535.65" y1="530.4" y2="530.4" stroke="#c0d0e0" stroke-width="1"/>
<line x1="58.5" x2="58.5" y1="530.4" y2="536.9" stroke="#ccd6e4" stroke-width="1"/>
<line x1="78.3" x2="78.3" y1="530.4" y2="536.9" stroke="#ccd6e4" stroke-width="1"/>
<line x1="98.2" x2="98.2" y1="530.4" y2="536.9" stroke="#ccd6e4" stroke-width="1"/>
<line x1="118.1" x2="118.1" y1="530.4" y2="536.9" stroke="#ccd6e4" stroke-width="1"/>
<line x1="138.0" x2="138.0" y1="530.4" y2="536.9" stroke="#ccd6e4" stroke-width="1"/>
<line x1="157.9" x2="157.9" y1="530.4" y2="536.9" stroke="#ccd6e4" stroke-width="1"/>
<line x1="177.8" x2="177.8" y1="530.4" y2="536.9" stroke="#ccd6e4" stroke-width="1"/>
<line x1="197.6" x2="197.6" y1="530.4" y2="536.9" stroke="#ccd6e4" stroke-width="1"/>
<line x1="217.5" x2="217.5" y1="530.4" y2="536.9" stroke="#ccd6e4" stroke-width="1"/>
<line x1="237.4" x2="237.4" y1="530.4" y2="536.9" stroke="#ccd6e4" stroke-width="1"/>
<line x1="257.3" x2="257.3" y1="530.4" y2="536.9" stroke="#ccd6e4" stroke-width="1"/>
<line x1="277.2" x2="277.2" y1="530.4" y2="536.9" stroke="#ccd6e4" stroke-width="1"/>
<line x1="297.1" x2="297.1" y1="530.4" y2="536.9" stroke="#ccd6e4" stroke-width="1"/>
<line x1="316.9" x2="316.9" y1="530.4" y2="536.9" stroke="#ccd6e4" stroke-width="1"/>
<line x1="336.8" x2="336.8" y1="530.4" y2="536.9" stroke="#ccd6e4" stroke-width="1"/>
<line x1="356.7" x2="356.7" y1="530.4" y2="536.9" stroke="#ccd6e4" stroke-width="1"/>
<line x1="376.6" x2="376.6" y1="530.4" y2="536.9" stroke="#ccd6e4" stroke-width="1"/>
<line x1="396.5" x2="396.5" y1="530.4" y2="536.9" stroke="#ccd6e4" stroke-width="1"/>
<line x1="416.4" x2="416.4" y1="530.4" y2="536.9" stroke="#ccd6e4" stroke-width="1"/>
<line x1="436.2" x2="436.2" y1="530.4" y2="536.9" stroke="#ccd6e4" stroke-width="1"/>
<line x1="456.1" x2="456.1" y1="530.4" y2="536.9" stroke="#ccd6e4" stroke-width="1"/>
<line x1="476.0" x2="476.0" y1="530.4" y2="536.9" stroke="#ccd6e4" stroke-width="1"/>
<line x1="495.9" x2="495.9" y1="530.4" y2="536.9" stroke="#ccd6e4" stroke-width="1"/>
<line x1="515.8" x2="515.8" y1="530.4" y2="536.9" stroke="#ccd6e4" stroke-width="1"/>
<line x1="535.6" x2="535.6" y1="530.4" y2="536.9" stroke="#ccd6e4" stroke-width="1"/>
<rect x="63.4" y="490.9" width="10" height="39.5" fill="#ff0000" stroke="#4a4a4a" stroke-width="1"/>
<text transform="translate(70.2,539.7) rotate(-45)" class="xl">8 PM</text>
<rect x="83.3" y="491.4" width="10" height="39.0" fill="#ff0000" stroke="#4a4a4a" stroke-width="1"/>
<text transform="translate(90.1,539.7) rotate(-45)" class="xl">9 PM</text>
<rect x="103.2" y="493.3" width="10" height="37.1" fill="#ff0000" stroke="#4a4a4a" stroke-width="1"/>
<text transform="translate(110.0,539.7) rotate(-45)" class="xl">10 PM</text>
<rect x="123.1" y="499.6" width="10" height="30.8" fill="#ff7e00" stroke="#4a4a4a" stroke-width="1"/>
<text transform="translate(129.9,539.7) rotate(-45)" class="xl">11 PM</text>
<rect x="142.9" y="505.9" width="10" height="24.5" fill="#ff7e00" stroke="#4a4a4a" stroke-width="1"/>
<text transform="translate(149.7,539.7) rotate(-45)" class="xl">Nov 04, 2020 12 AM</text>
<rect x="162.8" y="509.8" width="10" height="20.6" fill="#ffff00" stroke="#4a4a4a" stroke-width="1"/>
<text transform="translate(169.6,539.7) rotate(-45)" class="xl">1 AM</text>
<rect x="182.7" y="510.8" width="10" height="19.6" fill="#ffff00" stroke="#4a4a4a" stroke-width="1"/>
<text transform="translate(189.5,539.7) rotate(-45)" class="xl">2 AM</text>
<rect x="202.6" y="512.7" width="10" height="17.7" fill="#ffff00" stroke="#4a4a4a" stroke-width="1"/>
<text transform="translate(209.4,539.7) rotate(-45)" class="xl">3 AM</text>
<rect x="222.5" y="514.6" width="10" height="15.8" fill="#ffff00" stroke="#4a4a4a" stroke-width="1"/>
<text transform="translate(229.3,539.7) rotate(-45)" class="xl">4 AM</text>
<rect x="242.3" y="516.6" width="10" height="13.8" fill="#ffff00" stroke="#4a4a4a" stroke-width="1"/>
<text transform="translate(249.1,539.7) rotate(-45)" class="xl">5 AM</text>
<rect x="262.2" y="516.6" width="10" height="13.8" fill="#ffff00" stroke="#4a4a4a" stroke-width="1"/>
<text transform="translate(269.0,539.7) rotate(-45)" class="xl">6 AM</text>
<rect x="282.1" y="517.8" width="10" height="12.6" fill="#ffff00" stroke="#4a4a4a" stroke-width="1"/>
<text transform="translate(288.9,539.7) rotate(-45)" class="xl">7 AM</text>
<rect x="302.0" y="517.8" width="10" height="12.6" fill="#ffff00" stroke="#4a4a4a" stroke-width="1"/>
<text transform="translate(308.8,539.7) rotate(-45)" class="xl">8 AM</text>
<rect x="321.9" y="519.0" width="10" height="11.4" fill="#00e400" stroke="#4a4a4a" stroke-width="1"/>
<text transform="translate(328.7,539.7) rotate(-45)" class="xl">9 AM</text>
<rect x="341.8" y="517.1" width="10" height="13.3" fill="#ffff00" stroke="#4a4a4a" stroke-width="1"/>
<text transform="translate(348.6,539.7) rotate(-45)" class="xl">10 AM</text>
<rect x="361.6" y="515.9" width="10" height="14.5" fill="#ffff00" stroke="#4a4a4a" stroke-width="1"/>
<text transform="translate(368.4,539.7) rotate(-45)" class="xl">11 AM</text>
<rect x="381.5" y="513.9" width="10" height="16.5" fill="#ffff00" stroke="#4a4a4a" stroke-width="1"/>
<text transform="translate(388.3,539.7) rotate(-45)" class="xl">12 PM</text>
<rect x="401.4" y="502.8" width="10" height="27.6" fill="#ff7e00" stroke="#4a4a4a" stroke-width="1"/>
<text transform="translate(408.2,539.7) rotate(-45)" class="xl">1 PM</text>
<rect x="421.3" y="493.3" width="10" height="37.1" fill="#ff0000" stroke="#4a4a4a" stroke-width="1"/>
<text transform="translate(428.1,539.7) rotate(-45)" class="xl">2 PM</text>
<rect x="441.2" y="493.8" width="10" height="36.6" fill="#ff0000" stroke="#4a4a4a" stroke-width="1"/>
<text transform="translate(448.0,539.7) rotate(-45)" class="xl">3 PM</text>
<rect x="461.1" y="496.9" width="10" height="33.5" fill="#ff7e00" stroke="#4a4a4a" stroke-width="1"/>
<text transform="translate(467.9,539.7) rotate(-45)" class="xl">4 PM</text>
<rect x="480.9" y="502.8" width="10" height="27.6" fill="#ff7e00" stroke="#4a4a4a" stroke-width="1"/>
<text transform="translate(487.7,539.7) rotate(-45)" class="xl">5 PM</text>
<rect x="500.8" y="504.7" width="10" height="25.7" fill="#ff7e00" stroke="#4a4a4a" stroke-width="1"/>
<text transform="translate(507.6,539.7) rotate(-45)" class="xl">6 PM</text>
<rect x="520.7" y="491.4" width="10" height="39.0" fill="#ff0000" stroke="#4a4a4a" stroke-width="1"/>
<text transform="translate(527.5,539.7) rotate(-45)" class="xl">7 PM</text>

<text transform="translate(27.4,466) rotate(-90)" style="font:8.4px 'Liberation Sans',sans-serif;text-anchor:middle;fill:#222">AQI</text>
</svg>

<div id="cond" class="abs">
<div class="h"><div style="font-size:10px;line-height:14px;padding-top:4px">Current Conditions</div><div style="font-size:8px;line-height:14px">observed at</div><div style="font-size:10px;line-height:14px">Nov 4, 2020 7:00 PM (LT)</div></div>
<div class="r">161 AQI<br>Unhealthy<br>PM2.5</div>
<div class="m">Health Message</div>
<div class="p">Everyone may begin to experience health effects when AQI values are between 151 and 200. Members of sensitive groups may experience more serious health effects.</div>
</div>
<div id="note2" class="abs">Note: Values above 500 are considered Beyond the</div>
</body></html>
